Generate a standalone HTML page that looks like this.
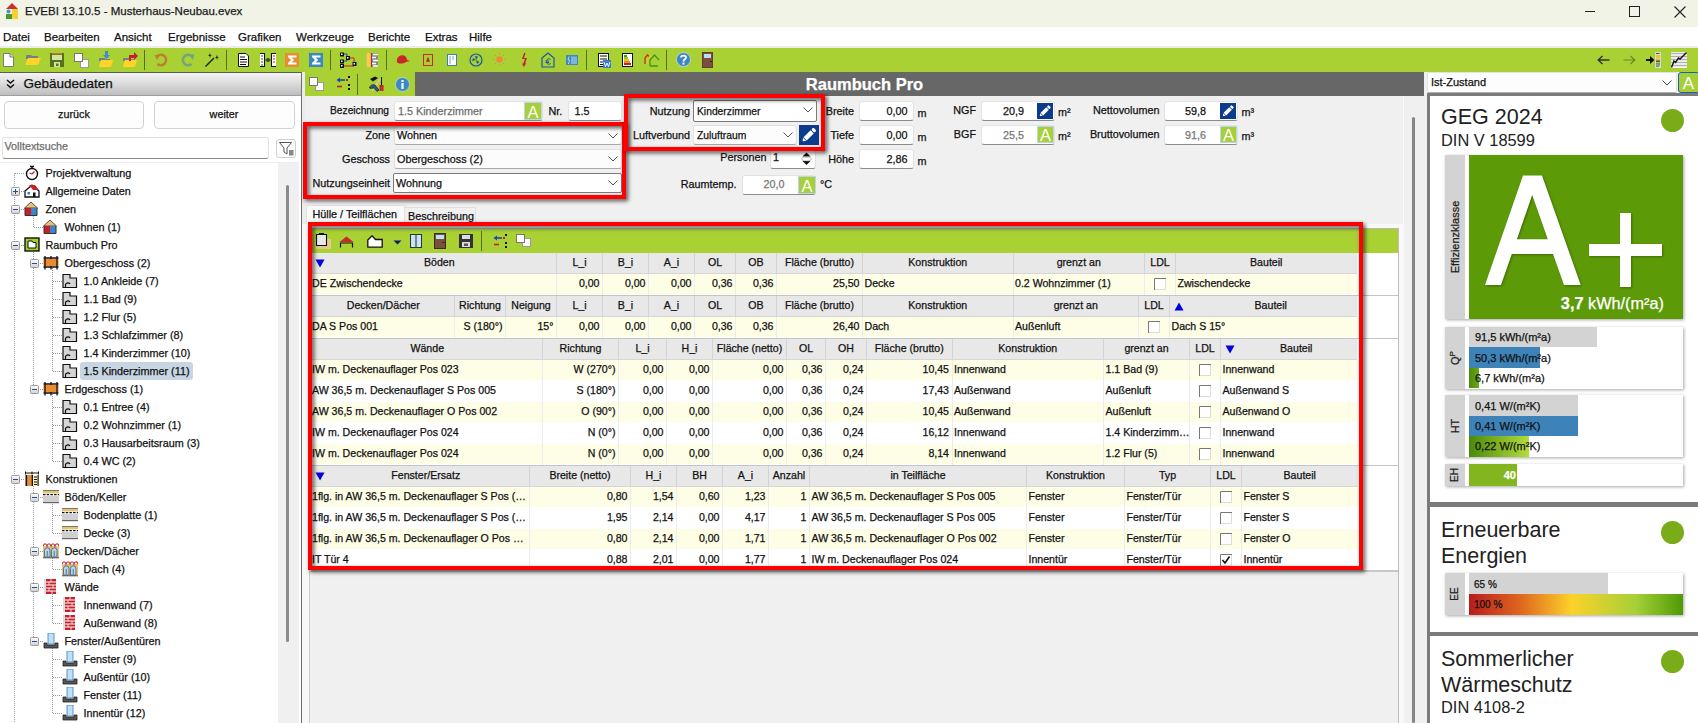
<!DOCTYPE html>
<html><head><meta charset="utf-8"><title>EVEBI</title>
<style>
html,body{margin:0;padding:0;width:1698px;height:723px;overflow:hidden;background:#f0f0f0;font-family:"Liberation Sans", sans-serif;}
body>div,body>svg{position:absolute;box-sizing:border-box;}
.t{position:absolute;white-space:nowrap;line-height:1;-webkit-text-stroke:0.25px currentColor;}
</style></head><body>
<div style="left:0px;top:0px;width:1698px;height:27px;background:#f1f3e7"></div>
<svg style="position:absolute;left:5px;top:3px;" width="14" height="16" viewBox="0 0 14 16"><path d="M7 0 L13 6 L1 6 Z" fill="#c8302a"/><rect x="7" y="6" width="6" height="10" fill="#f5d030"/><rect x="1" y="11" width="6" height="5" fill="#4a9a2a"/><circle cx="3.5" cy="8.5" r="2" fill="#4a90d0"/></svg>
<div class="t" style="left:25px;top:6.42px;font-size:11.5px;color:#1a1a1a;font-weight:normal;">EVEBI 13.10.5 - Musterhaus-Neubau.evex</div>
<svg style="position:absolute;left:1580px;top:0px;" width="118" height="27" viewBox="0 0 118 27"><line x1="5" y1="11.5" x2="15" y2="11.5" stroke="#222" stroke-width="1"/><rect x="49.5" y="6.5" width="10" height="10" fill="none" stroke="#222" stroke-width="1"/><path d="M94.5 6.5 L105.5 17.5 M105.5 6.5 L94.5 17.5" stroke="#222" stroke-width="1.1"/></svg>
<div style="left:0px;top:27px;width:1698px;height:19px;background:#ffffff"></div>
<div style="left:0px;top:46px;width:1698px;height:2px;background:#ececec"></div>
<div class="t" style="left:3px;top:31.73px;font-size:11.5px;color:#111;font-weight:normal;">Datei</div>
<div class="t" style="left:44px;top:31.73px;font-size:11.5px;color:#111;font-weight:normal;">Bearbeiten</div>
<div class="t" style="left:114px;top:31.73px;font-size:11.5px;color:#111;font-weight:normal;">Ansicht</div>
<div class="t" style="left:168px;top:31.73px;font-size:11.5px;color:#111;font-weight:normal;">Ergebnisse</div>
<div class="t" style="left:238px;top:31.73px;font-size:11.5px;color:#111;font-weight:normal;">Grafiken</div>
<div class="t" style="left:296px;top:31.73px;font-size:11.5px;color:#111;font-weight:normal;">Werkzeuge</div>
<div class="t" style="left:368px;top:31.73px;font-size:11.5px;color:#111;font-weight:normal;">Berichte</div>
<div class="t" style="left:425px;top:31.73px;font-size:11.5px;color:#111;font-weight:normal;">Extras</div>
<div class="t" style="left:469px;top:31.73px;font-size:11.5px;color:#111;font-weight:normal;">Hilfe</div>
<div style="left:0px;top:48px;width:1698px;height:24px;background:#a9d134"></div>
<svg style="position:absolute;left:2px;top:52px;" width="13" height="16" viewBox="0 0 13 16"><path d="M1.5 1.5 H8 L11.5 5 V14.5 H1.5 Z" fill="#fff" stroke="#7a7a82" stroke-width="1"/><path d="M8 1.5 V5 H11.5" fill="#e0e0e0" stroke="#7a7a82" stroke-width="1"/></svg>
<svg style="position:absolute;left:25px;top:53px;" width="16" height="13" viewBox="0 0 16 13"><path d="M1 2 H6 L7 3 H13 V6 H1 Z" fill="#7d7d8a"/><path d="M3 5 H16 L13 12 H0 Z" fill="#ffd42a"/></svg>
<svg style="position:absolute;left:50px;top:53px;" width="14" height="14" viewBox="0 0 14 14"><rect x="0" y="0" width="14" height="14" fill="#5b6f1f"/><rect x="2" y="0" width="10" height="1.5" fill="#c8752a"/><rect x="2" y="2" width="10" height="5" fill="#cfe6a0"/><rect x="4" y="9" width="6" height="5" fill="#cfe6a0"/><rect x="6" y="10.5" width="2.5" height="2.5" fill="#5b6f1f"/></svg>
<svg style="position:absolute;left:74px;top:53px;" width="15" height="15" viewBox="0 0 15 15"><rect x="6.5" y="6.5" width="8" height="8" fill="#fff" stroke="#999" stroke-width="1"/><rect x="0.5" y="0.5" width="8" height="8" fill="#fff" stroke="#777" stroke-width="1"/></svg>
<svg style="position:absolute;left:99px;top:51px;" width="15" height="17" viewBox="0 0 15 17"><path d="M0 7 H6 V8 H11 V10 H0 Z" fill="#7d7d8a"/><path d="M2 9 H14 L12 16 H0 Z" fill="#ffd42a"/><path d="M6 0 H9 V4 H11 L7.5 8 L4 4 H6 Z" fill="#3b8fd0"/></svg>
<svg style="position:absolute;left:123px;top:51px;" width="16" height="17" viewBox="0 0 16 17"><path d="M0 7 H6 V8 H11 V10 H0 Z" fill="#7d7d8a"/><path d="M2 9 H14 L12 16 H0 Z" fill="#ffd42a"/><path d="M6 4 H11 V1 L15 5 L11 9 V7 H8 V10 H6 Z" fill="#c8202a"/></svg>
<div style="left:144px;top:50px;width:1px;height:20px;background:#54701a"></div>
<svg style="position:absolute;left:154px;top:53px;" width="15" height="15" viewBox="0 0 15 15"><path d="M3.5 3 A5.2 5.2 0 1 1 3.5 11" fill="none" stroke="#bf7e32" stroke-width="2.6"/><path d="M0.5 2 L6 2 L3 7 Z" fill="#bf7e32"/></svg>
<svg style="position:absolute;left:180px;top:53px;" width="15" height="15" viewBox="0 0 15 15"><path d="M11.5 3 A5.2 5.2 0 1 0 11.5 11" fill="none" stroke="#6fa77a" stroke-width="2.6"/><path d="M14.5 1 L9 2 L13 7 Z" fill="#6fa77a"/></svg>
<svg style="position:absolute;left:205px;top:53px;" width="14" height="14" viewBox="0 0 14 14"><path d="M0.5 13.5 L9 5" stroke="#222" stroke-width="1.4"/><path d="M4 2 L5 0 L5.5 2 L7 2.5 L5.5 3 L5 5 L4.5 3 L3 2.5Z M11 4 L12 2 L12.5 4 L14 4.5 L12.5 5 L12 7 L11.5 5 L10 4.5Z" fill="#222"/></svg>
<div style="left:226px;top:50px;width:1px;height:20px;background:#54701a"></div>
<svg style="position:absolute;left:238px;top:53px;" width="11" height="14" viewBox="0 0 11 14"><path d="M0.5 0.5 H8 L10.5 3 V13.5 H0.5Z" fill="#fff" stroke="#111"/><path d="M2 4 H7 M2 6.5 H9 M2 9 H9 M2 11.5 H8" stroke="#111" stroke-width="1"/></svg>
<svg style="position:absolute;left:259px;top:53px;" width="18" height="14" viewBox="0 0 18 14"><path d="M1 0.5 H5.5 V13.5 H1" fill="#fff" stroke="#111" stroke-width="1.1"/><path d="M17 0.5 H12.5 V13.5 H17" fill="#fff" stroke="#111" stroke-width="1.1"/><path d="M2 3 H4 M2 6 H4 M2 9 H4 M2 12 H4" stroke="#333" stroke-width="0.9"/><path d="M14 3 H16 M14 6 H16 M14 9 H16" stroke="#c8202a" stroke-width="1"/><circle cx="9" cy="7" r="2" fill="#3a4a2a"/><path d="M5.5 7 H12.5" stroke="#444" stroke-width="0.8"/></svg>
<svg style="position:absolute;left:285px;top:53px;" width="14" height="14" viewBox="0 0 14 14"><rect width="14" height="14" fill="#e98c33"/><path d="M3 2.5 H11.5 V4.5 H6.5 L9.2 7 L6.5 9.5 H11.5 V11.5 H3 V10 L6 7 L3 4 Z" fill="#fff"/></svg>
<svg style="position:absolute;left:309px;top:53px;" width="14" height="14" viewBox="0 0 14 14"><rect width="14" height="14" fill="#3b88c3"/><path d="M3 2.5 H11.5 V4.5 H6.5 L9.2 7 L6.5 9.5 H11.5 V11.5 H3 V10 L6 7 L3 4 Z" fill="#fff"/></svg>
<div style="left:330px;top:50px;width:1px;height:20px;background:#54701a"></div>
<svg style="position:absolute;left:339px;top:52px;" width="18" height="17" viewBox="0 0 18 17"><path d="M4 2 H8 V5 M4 9 H8 V7" fill="none" stroke="#1a46b0" stroke-width="1"/><path d="M10 6 H15 V11 M4 14 H15 V13" fill="none" stroke="#c8202a" stroke-width="1"/><rect x="1" y="0.5" width="4" height="4" fill="#111"/><rect x="2" y="1.5" width="1.5" height="1.5" fill="#fff"/><rect x="7" y="4" width="4" height="4" fill="#111"/><rect x="8" y="5" width="1.5" height="1.5" fill="#fff"/><rect x="1" y="7.5" width="4" height="4" fill="#111"/><rect x="2" y="8.5" width="1.5" height="1.5" fill="#fff"/><rect x="1" y="12" width="4" height="4" fill="#111"/><rect x="2" y="13" width="1.5" height="1.5" fill="#fff"/><rect x="13.5" y="10" width="4" height="4" fill="#111"/><rect x="14.5" y="11" width="1.5" height="1.5" fill="#fff"/></svg>
<svg style="position:absolute;left:366px;top:53px;" width="12" height="14" viewBox="0 0 12 14"><rect width="5" height="14" fill="#f5d040"/><path d="M0.5 0 V14 M4.5 0 V14" stroke="#aaa" stroke-width="0.8" stroke-dasharray="1.5 1"/><rect x="5" width="1" height="14" fill="#c8202a"/><rect x="6" width="6" height="14" fill="#8a8a8a"/><path d="M7 1.5 H12 M6 4.5 H10 M7 7.5 H12 M6 10.5 H10 M7 13 H12" stroke="#fff" stroke-width="1.4"/></svg>
<div style="left:386px;top:50px;width:1px;height:20px;background:#54701a"></div>
<svg style="position:absolute;left:396px;top:54px;" width="14" height="11" viewBox="0 0 14 11"><path d="M1 8 C0 2 6 0 9 2 C10 3 11 4 11 6 L14 7 L10 8 C7 10 2 10 1 8Z" fill="#c8282a"/></svg>
<svg style="position:absolute;left:423px;top:54px;" width="10" height="12" viewBox="0 0 10 12"><rect x="0.5" y="0.5" width="9" height="11" fill="none" stroke="#c8282a"/><path d="M5 3 C6 5 7 6 6.5 8 H3.5 C3 6 4 5 5 3Z" fill="#c8282a"/></svg>
<svg style="position:absolute;left:447px;top:54px;" width="10" height="12" viewBox="0 0 10 12"><rect x="0.5" y="0.5" width="9" height="11" fill="#fff" stroke="#3b7fc0"/><path d="M3 2 V10 M6 2 V6" stroke="#6ba0d0" stroke-width="1"/></svg>
<svg style="position:absolute;left:469px;top:53px;" width="14" height="14" viewBox="0 0 14 14"><circle cx="7" cy="7" r="6" fill="none" stroke="#1a5aa0" stroke-width="1.2"/><path d="M7 7 L6 3 L9 3.5Z M7 7 L10.5 9 L8 11Z M7 7 L3 8 L4 5Z" fill="#1a5aa0"/></svg>
<svg style="position:absolute;left:493px;top:53px;" width="13" height="13" viewBox="0 0 13 13"><circle cx="6.5" cy="6.5" r="3.2" fill="#ec8b3a"/><path d="M6.5 0 V1.5 M6.5 11.5 V13 M0 6.5 H1.5 M11.5 6.5 H13 M2 2 L3 3 M10 10 L11 11 M2 11 L3 10 M10 3 L11 2" stroke="#ec8b3a" stroke-width="1"/></svg>
<svg style="position:absolute;left:520px;top:53px;" width="8" height="14" viewBox="0 0 8 14"><path d="M4 0 L2 6 H5 L3 11 L1.5 10 L4 14 L6.5 9.5 L5 10.5 L7 5 H4 L5.5 0Z" fill="#c8202a"/></svg>
<svg style="position:absolute;left:541px;top:52px;" width="14" height="16" viewBox="0 0 14 16"><path d="M1 6 L7 1 L13 6 V15 H1Z" fill="none" stroke="#1a5aa0" stroke-width="1.2"/><path d="M9.5 7.5 C8 6 5.5 7 5.5 9.5 C5.5 12 8 13 9.5 11.5 M4.5 9 H8 M4.5 10.5 H8" fill="none" stroke="#1a5aa0" stroke-width="1"/></svg>
<svg style="position:absolute;left:566px;top:55px;" width="12" height="10" viewBox="0 0 12 10"><rect width="12" height="10" fill="#3b88c3"/><path d="M3 1.5 L2 5 L3.5 5 L2.5 9 M6 1.5 V9 M8 1.5 V9 M10 1.5 V9" stroke="#d8e8f5" stroke-width="0.9"/></svg>
<div style="left:586px;top:50px;width:1px;height:20px;background:#54701a"></div>
<svg style="position:absolute;left:598px;top:53px;" width="13" height="15" viewBox="0 0 13 15"><rect x="0.5" y="0.5" width="10" height="13" fill="#fff" stroke="#111"/><path d="M2 3 H9 M2 6 H9 M2 9 H6 M2 11.5 H6" stroke="#111"/><rect x="5" y="7" width="8" height="8" fill="#3a7cc8"/><path d="M6 9 L7.5 13.5 L9 10 L10.5 13.5 L12 9" fill="none" stroke="#fff" stroke-width="0.9"/></svg>
<svg style="position:absolute;left:622px;top:53px;" width="11" height="14" viewBox="0 0 11 14"><rect x="0.5" y="0.5" width="10" height="13" fill="#fff" stroke="#111"/><rect x="2" y="2" width="3" height="2" fill="#3a9a20"/><rect x="2" y="4" width="4" height="2" fill="#9ac820"/><rect x="2" y="6" width="5" height="2" fill="#f0c020"/><rect x="2" y="8" width="6" height="2" fill="#ec8a30"/><rect x="2" y="10" width="7" height="2" fill="#c8202a"/></svg>
<svg style="position:absolute;left:644px;top:53px;" width="16" height="14" viewBox="0 0 16 14"><path d="M1 11 V5 L3.5 2 L5 3.5" fill="none" stroke="#c8202a" stroke-width="1.2"/><path d="M3.5 12 V6 L6.5 2.5 L8 4" fill="none" stroke="#f0c020" stroke-width="1.2"/><path d="M6 13 V7 L10.5 2 L15 7 M6 13 H14" fill="none" stroke="#3a9a20" stroke-width="1.3"/></svg>
<div style="left:666px;top:50px;width:1px;height:20px;background:#54701a"></div>
<svg style="position:absolute;left:676px;top:52px;" width="15" height="15" viewBox="0 0 15 15"><circle cx="7.5" cy="7.5" r="7" fill="#3b88c3" stroke="#c8dce8" stroke-width="0.8"/><path d="M5 5.5 C5 3 10 3 10 5.5 C10 7.5 7.5 7 7.5 9.5" fill="none" stroke="#fff" stroke-width="1.8"/><rect x="6.5" y="10.5" width="2" height="2" fill="#fff"/></svg>
<svg style="position:absolute;left:702px;top:52px;" width="11" height="16" viewBox="0 0 11 16"><rect x="0" y="0" width="11" height="16" fill="#7b4e3e"/><rect x="0" y="0" width="11" height="16" fill="none" stroke="#4a2e22" stroke-width="1"/><rect x="2" y="2" width="7" height="4" fill="#b8dcf0"/><rect x="8" y="9" width="2" height="1" fill="#222"/></svg>
<svg style="position:absolute;left:1597px;top:55px;" width="13" height="10" viewBox="0 0 13 10"><path d="M12.5 5 H1.5 M5.5 1 L1.2 5 L5.5 9" fill="none" stroke="#333" stroke-width="1.4"/></svg>
<svg style="position:absolute;left:1623px;top:55px;" width="13" height="10" viewBox="0 0 13 10"><path d="M0.5 5 H11.5 M7.5 1 L11.8 5 L7.5 9" fill="none" stroke="#6a8a2a" stroke-width="1.2"/></svg>
<svg style="position:absolute;left:1645px;top:52px;" width="17" height="16" viewBox="0 0 17 16"><path d="M1 8 H6" stroke="#111" stroke-width="2"/><path d="M5 4 L9.5 8 L5 12Z" fill="#111"/><rect x="10" y="0" width="6" height="16" fill="#d8d8d8"/><rect x="11" y="1" width="3.5" height="1" fill="#555"/><rect x="11" y="3" width="4" height="3.5" fill="#f3c523"/><rect x="11" y="7.5" width="4" height="1.5" fill="#6aa84f"/><rect x="11" y="9" width="4" height="1" fill="#c8202a"/><rect x="11" y="10.5" width="4" height="1.5" fill="#6aa84f"/><rect x="11" y="12.5" width="4" height="1" fill="#555"/><rect x="11" y="14" width="3" height="1" fill="#6aa84f"/></svg>
<svg style="position:absolute;left:1671px;top:52px;" width="16" height="16" viewBox="0 0 16 16"><rect width="16" height="16" fill="#fff"/><path d="M0 1.5 H16 M0 4.5 H16 M0 7.5 H16 M0 10.5 H16 M0 13.5 H16" stroke="#b0b0b0" stroke-width="1.6"/><path d="M0.5 15.5 L3 9 L4.5 10.5 L7.5 6 L9 7 L15.5 0.5" fill="none" stroke="#111" stroke-width="1.4"/></svg>
<div style="left:0px;top:72px;width:301px;height:651px;background:#ffffff"></div>
<div style="left:0px;top:72px;width:301px;height:1px;background:#5a5a5a"></div>
<div style="left:0px;top:73px;width:301px;height:22px;background:linear-gradient(#f4f4f4,#e2e2e2 35%,#bebebe)"></div>
<div style="left:0px;top:95px;width:301px;height:1px;background:#9e9e9e"></div>
<div style="left:301px;top:72px;width:1px;height:651px;background:#6e6e6e"></div>
<div style="left:302px;top:72px;width:3px;height:651px;background:#ececec"></div>
<svg style="position:absolute;left:6px;top:79px;" width="9" height="10" viewBox="0 0 9 10"><path d="M1 1 L4.5 4 L8 1 M1 5.5 L4.5 8.5 L8 5.5" fill="none" stroke="#111" stroke-width="1.5"/></svg>
<div class="t" style="left:23.5px;top:77.33px;font-size:13.5px;color:#111;font-weight:normal;">Gebäudedaten</div>
<div style="left:4px;top:101px;width:140px;height:28px;background:#fdfdfd;border:1px solid #d3d3d3;border-radius:4px"></div>
<div style="left:154px;top:101px;width:141px;height:28px;background:#fdfdfd;border:1px solid #d3d3d3;border-radius:4px"></div>
<div class="t" style="left:-226px;width:600px;text-align:center;top:109.42px;font-size:10.8px;color:#111;font-weight:normal;">zurück</div>
<div class="t" style="left:-76px;width:600px;text-align:center;top:109.42px;font-size:10.8px;color:#111;font-weight:normal;">weiter</div>
<div style="left:2px;top:137px;width:267px;height:22px;background:#fff;border:1px solid #e3e3e3;border-bottom:1px solid #8a8a8a;border-radius:3px"></div>
<div class="t" style="left:4.5px;top:141.22px;font-size:10.8px;color:#6d6d6d;font-weight:normal;">Volltextsuche</div>
<div style="left:276px;top:139px;width:20px;height:19px;background:#fdfdfd;border:1px solid #d0d0d0;border-radius:3px"></div>
<svg style="position:absolute;left:279px;top:142px;" width="15" height="14" viewBox="0 0 15 14"><path d="M0.5 0.5 H12.5 L8 6 V12 L5 10 V6 Z" fill="#fff" stroke="#555" stroke-width="1"/><rect x="10" y="8" width="4.5" height="5.5" fill="#888"/></svg>
<div style="left:0px;top:162px;width:299px;height:1px;background:#ececec"></div>
<div style="left:278px;top:163px;width:21px;height:560px;background:#f0f0f0"></div>
<div style="left:286px;top:185px;width:3px;height:457px;background:#8a8a8a;border-radius:1.5px"></div>
<div style="left:14px;top:173px;width:1px;height:550px;background-image:linear-gradient(#9a9a9a 50%,transparent 50%);background-size:1px 2px"></div>
<div style="left:33px;top:214px;width:1px;height:13px;background-image:linear-gradient(#9a9a9a 50%,transparent 50%);background-size:1px 2px"></div>
<div style="left:33px;top:250px;width:1px;height:139px;background-image:linear-gradient(#9a9a9a 50%,transparent 50%);background-size:1px 2px"></div>
<div style="left:52px;top:268px;width:1px;height:103px;background-image:linear-gradient(#9a9a9a 50%,transparent 50%);background-size:1px 2px"></div>
<div style="left:52px;top:394px;width:1px;height:67px;background-image:linear-gradient(#9a9a9a 50%,transparent 50%);background-size:1px 2px"></div>
<div style="left:33px;top:484px;width:1px;height:157px;background-image:linear-gradient(#9a9a9a 50%,transparent 50%);background-size:1px 2px"></div>
<div style="left:52px;top:502px;width:1px;height:31px;background-image:linear-gradient(#9a9a9a 50%,transparent 50%);background-size:1px 2px"></div>
<div style="left:52px;top:556px;width:1px;height:13px;background-image:linear-gradient(#9a9a9a 50%,transparent 50%);background-size:1px 2px"></div>
<div style="left:52px;top:592px;width:1px;height:31px;background-image:linear-gradient(#9a9a9a 50%,transparent 50%);background-size:1px 2px"></div>
<div style="left:52px;top:646px;width:1px;height:67px;background-image:linear-gradient(#9a9a9a 50%,transparent 50%);background-size:1px 2px"></div>
<div style="left:80px;top:362px;width:113px;height:18px;background:#c8d6e4;border-radius:3px"></div>
<div style="left:15px;top:173px;width:9px;height:1px;background-image:linear-gradient(90deg,#9a9a9a 50%,transparent 50%);background-size:2px 1px"></div>
<svg style="position:absolute;left:24px;top:165px;" width="16" height="16" viewBox="0 0 16 16"><circle cx="8" cy="9" r="5.5" fill="#fff" stroke="#111" stroke-width="1.4"/><path d="M6 1.5 H10 M8 1.5 V3.5" stroke="#111" stroke-width="1.4"/><path d="M8 9 L10.5 6.5 M8 9 L5.5 8" stroke="#c8202a" stroke-width="1.2"/></svg>
<div class="t" style="left:45.5px;top:167.82px;font-size:10.8px;color:#111;font-weight:normal;">Projektverwaltung</div>
<div style="left:15px;top:191px;width:9px;height:1px;background-image:linear-gradient(90deg,#9a9a9a 50%,transparent 50%);background-size:2px 1px"></div>
<svg style="position:absolute;left:11.0px;top:186.5px;" width="9" height="9" viewBox="0 0 9 9"><defs><linearGradient id="eg" x1="0" y1="0" x2="0" y2="1"><stop offset="0" stop-color="#fff"/><stop offset="1" stop-color="#d0d0d0"/></linearGradient></defs><rect x="0.5" y="0.5" width="8" height="8" rx="1" fill="url(#eg)" stroke="#9a9a9a"/><path d="M2 4.5 H7" stroke="#2a4a9a" stroke-width="1"/><path d="M4.5 2 V7" stroke="#2a4a9a" stroke-width="1"/></svg>
<svg style="position:absolute;left:24px;top:183px;" width="16" height="16" viewBox="0 0 16 16"><path d="M1 8 L8 2 L15 8 V14 H1 Z" fill="#fff" stroke="#111" stroke-width="1.3"/><path d="M5 2 H11 L15 7 H9 Z" fill="#c8202a"/><rect x="3.5" y="9" width="2.5" height="2.5" fill="#3a7fc1"/><rect x="9" y="9.5" width="2.5" height="4.5" fill="#111"/></svg>
<div class="t" style="left:45.5px;top:185.82px;font-size:10.8px;color:#111;font-weight:normal;">Allgemeine Daten</div>
<div style="left:15px;top:209px;width:9px;height:1px;background-image:linear-gradient(90deg,#9a9a9a 50%,transparent 50%);background-size:2px 1px"></div>
<svg style="position:absolute;left:11.0px;top:204.5px;" width="9" height="9" viewBox="0 0 9 9"><defs><linearGradient id="eg" x1="0" y1="0" x2="0" y2="1"><stop offset="0" stop-color="#fff"/><stop offset="1" stop-color="#d0d0d0"/></linearGradient></defs><rect x="0.5" y="0.5" width="8" height="8" rx="1" fill="url(#eg)" stroke="#9a9a9a"/><path d="M2 4.5 H7" stroke="#2a4a9a" stroke-width="1"/></svg>
<svg style="position:absolute;left:24px;top:201px;" width="16" height="16" viewBox="0 0 16 16"><path d="M7 1 L13.5 7 H0.5 Z" fill="#e7c07a" stroke="#333" stroke-width="0.8"/><rect x="1" y="7" width="6" height="7" fill="#c8202a"/><rect x="7" y="7" width="6" height="7" fill="#3a86c8"/><path d="M1 7 V14.5 H13 V7" fill="none" stroke="#333" stroke-width="1"/></svg>
<div class="t" style="left:45.5px;top:203.82px;font-size:10.8px;color:#111;font-weight:normal;">Zonen</div>
<div style="left:34px;top:227px;width:9px;height:1px;background-image:linear-gradient(90deg,#9a9a9a 50%,transparent 50%);background-size:2px 1px"></div>
<svg style="position:absolute;left:43px;top:219px;" width="16" height="16" viewBox="0 0 16 16"><path d="M7 1 L13.5 7 H0.5 Z" fill="#e7c07a" stroke="#333" stroke-width="0.8"/><rect x="1" y="7" width="6" height="7" fill="#c8202a"/><rect x="7" y="7" width="6" height="7" fill="#3a86c8"/><path d="M1 7 V14.5 H13 V7" fill="none" stroke="#333" stroke-width="1"/></svg>
<div class="t" style="left:64.5px;top:221.82px;font-size:10.8px;color:#111;font-weight:normal;">Wohnen (1)</div>
<div style="left:15px;top:245px;width:9px;height:1px;background-image:linear-gradient(90deg,#9a9a9a 50%,transparent 50%);background-size:2px 1px"></div>
<svg style="position:absolute;left:11.0px;top:240.5px;" width="9" height="9" viewBox="0 0 9 9"><defs><linearGradient id="eg" x1="0" y1="0" x2="0" y2="1"><stop offset="0" stop-color="#fff"/><stop offset="1" stop-color="#d0d0d0"/></linearGradient></defs><rect x="0.5" y="0.5" width="8" height="8" rx="1" fill="url(#eg)" stroke="#9a9a9a"/><path d="M2 4.5 H7" stroke="#2a4a9a" stroke-width="1"/></svg>
<svg style="position:absolute;left:24px;top:237px;" width="16" height="16" viewBox="0 0 16 16"><rect x="1" y="1" width="14" height="13" fill="#9fcf2a" stroke="#111" stroke-width="1.4"/><path d="M4 4 H8 L9 5.5 H12 V11 H4 Z" fill="#fff" stroke="#111" stroke-width="1"/></svg>
<div class="t" style="left:45.5px;top:239.82px;font-size:10.8px;color:#111;font-weight:normal;">Raumbuch Pro</div>
<div style="left:34px;top:263px;width:9px;height:1px;background-image:linear-gradient(90deg,#9a9a9a 50%,transparent 50%);background-size:2px 1px"></div>
<svg style="position:absolute;left:30.0px;top:258.5px;" width="9" height="9" viewBox="0 0 9 9"><defs><linearGradient id="eg" x1="0" y1="0" x2="0" y2="1"><stop offset="0" stop-color="#fff"/><stop offset="1" stop-color="#d0d0d0"/></linearGradient></defs><rect x="0.5" y="0.5" width="8" height="8" rx="1" fill="url(#eg)" stroke="#9a9a9a"/><path d="M2 4.5 H7" stroke="#2a4a9a" stroke-width="1"/></svg>
<svg style="position:absolute;left:43px;top:255px;" width="16" height="16" viewBox="0 0 16 16"><rect x="0.5" y="4" width="15" height="7" fill="#ec8b2e"/><path d="M0.5 3 H15.5 M0.5 12 H15.5 M2 1 V14.5 M14 1 V14.5 M8 1 V4 M8 11 V14.5" stroke="#111" stroke-width="1.3"/></svg>
<div class="t" style="left:64.5px;top:257.82px;font-size:10.8px;color:#111;font-weight:normal;">Obergeschoss (2)</div>
<div style="left:53px;top:281px;width:9px;height:1px;background-image:linear-gradient(90deg,#9a9a9a 50%,transparent 50%);background-size:2px 1px"></div>
<svg style="position:absolute;left:62px;top:273px;" width="16" height="16" viewBox="0 0 16 16"><path d="M1 1.5 H8 V5 H14.5 V14.5 H1 Z" fill="#d5d5d5" stroke="#111" stroke-width="1.2"/><path d="M3.5 14.5 V11.5 A2.5 2.5 0 0 1 8 11" fill="none" stroke="#111" stroke-width="1.2"/></svg>
<div class="t" style="left:83.5px;top:275.82px;font-size:10.8px;color:#111;font-weight:normal;">1.0 Ankleide (7)</div>
<div style="left:53px;top:299px;width:9px;height:1px;background-image:linear-gradient(90deg,#9a9a9a 50%,transparent 50%);background-size:2px 1px"></div>
<svg style="position:absolute;left:62px;top:291px;" width="16" height="16" viewBox="0 0 16 16"><path d="M1 1.5 H8 V5 H14.5 V14.5 H1 Z" fill="#d5d5d5" stroke="#111" stroke-width="1.2"/><path d="M3.5 14.5 V11.5 A2.5 2.5 0 0 1 8 11" fill="none" stroke="#111" stroke-width="1.2"/></svg>
<div class="t" style="left:83.5px;top:293.82px;font-size:10.8px;color:#111;font-weight:normal;">1.1 Bad (9)</div>
<div style="left:53px;top:317px;width:9px;height:1px;background-image:linear-gradient(90deg,#9a9a9a 50%,transparent 50%);background-size:2px 1px"></div>
<svg style="position:absolute;left:62px;top:309px;" width="16" height="16" viewBox="0 0 16 16"><path d="M1 1.5 H8 V5 H14.5 V14.5 H1 Z" fill="#d5d5d5" stroke="#111" stroke-width="1.2"/><path d="M3.5 14.5 V11.5 A2.5 2.5 0 0 1 8 11" fill="none" stroke="#111" stroke-width="1.2"/></svg>
<div class="t" style="left:83.5px;top:311.82px;font-size:10.8px;color:#111;font-weight:normal;">1.2 Flur (5)</div>
<div style="left:53px;top:335px;width:9px;height:1px;background-image:linear-gradient(90deg,#9a9a9a 50%,transparent 50%);background-size:2px 1px"></div>
<svg style="position:absolute;left:62px;top:327px;" width="16" height="16" viewBox="0 0 16 16"><path d="M1 1.5 H8 V5 H14.5 V14.5 H1 Z" fill="#d5d5d5" stroke="#111" stroke-width="1.2"/><path d="M3.5 14.5 V11.5 A2.5 2.5 0 0 1 8 11" fill="none" stroke="#111" stroke-width="1.2"/></svg>
<div class="t" style="left:83.5px;top:329.82px;font-size:10.8px;color:#111;font-weight:normal;">1.3 Schlafzimmer (8)</div>
<div style="left:53px;top:353px;width:9px;height:1px;background-image:linear-gradient(90deg,#9a9a9a 50%,transparent 50%);background-size:2px 1px"></div>
<svg style="position:absolute;left:62px;top:345px;" width="16" height="16" viewBox="0 0 16 16"><path d="M1 1.5 H8 V5 H14.5 V14.5 H1 Z" fill="#d5d5d5" stroke="#111" stroke-width="1.2"/><path d="M3.5 14.5 V11.5 A2.5 2.5 0 0 1 8 11" fill="none" stroke="#111" stroke-width="1.2"/></svg>
<div class="t" style="left:83.5px;top:347.82px;font-size:10.8px;color:#111;font-weight:normal;">1.4 Kinderzimmer (10)</div>
<div style="left:53px;top:371px;width:9px;height:1px;background-image:linear-gradient(90deg,#9a9a9a 50%,transparent 50%);background-size:2px 1px"></div>
<svg style="position:absolute;left:62px;top:363px;" width="16" height="16" viewBox="0 0 16 16"><path d="M1 1.5 H8 V5 H14.5 V14.5 H1 Z" fill="#d5d5d5" stroke="#111" stroke-width="1.2"/><path d="M3.5 14.5 V11.5 A2.5 2.5 0 0 1 8 11" fill="none" stroke="#111" stroke-width="1.2"/></svg>
<div class="t" style="left:83.5px;top:365.82px;font-size:10.8px;color:#111;font-weight:normal;">1.5 Kinderzimmer (11)</div>
<div style="left:34px;top:389px;width:9px;height:1px;background-image:linear-gradient(90deg,#9a9a9a 50%,transparent 50%);background-size:2px 1px"></div>
<svg style="position:absolute;left:30.0px;top:384.5px;" width="9" height="9" viewBox="0 0 9 9"><defs><linearGradient id="eg" x1="0" y1="0" x2="0" y2="1"><stop offset="0" stop-color="#fff"/><stop offset="1" stop-color="#d0d0d0"/></linearGradient></defs><rect x="0.5" y="0.5" width="8" height="8" rx="1" fill="url(#eg)" stroke="#9a9a9a"/><path d="M2 4.5 H7" stroke="#2a4a9a" stroke-width="1"/></svg>
<svg style="position:absolute;left:43px;top:381px;" width="16" height="16" viewBox="0 0 16 16"><rect x="0.5" y="4" width="15" height="7" fill="#ec8b2e"/><path d="M0.5 3 H15.5 M0.5 12 H15.5 M2 1 V14.5 M14 1 V14.5 M8 1 V4 M8 11 V14.5" stroke="#111" stroke-width="1.3"/></svg>
<div class="t" style="left:64.5px;top:383.82px;font-size:10.8px;color:#111;font-weight:normal;">Erdgeschoss (1)</div>
<div style="left:53px;top:407px;width:9px;height:1px;background-image:linear-gradient(90deg,#9a9a9a 50%,transparent 50%);background-size:2px 1px"></div>
<svg style="position:absolute;left:62px;top:399px;" width="16" height="16" viewBox="0 0 16 16"><path d="M1 1.5 H8 V5 H14.5 V14.5 H1 Z" fill="#d5d5d5" stroke="#111" stroke-width="1.2"/><path d="M3.5 14.5 V11.5 A2.5 2.5 0 0 1 8 11" fill="none" stroke="#111" stroke-width="1.2"/></svg>
<div class="t" style="left:83.5px;top:401.82px;font-size:10.8px;color:#111;font-weight:normal;">0.1 Entree (4)</div>
<div style="left:53px;top:425px;width:9px;height:1px;background-image:linear-gradient(90deg,#9a9a9a 50%,transparent 50%);background-size:2px 1px"></div>
<svg style="position:absolute;left:62px;top:417px;" width="16" height="16" viewBox="0 0 16 16"><path d="M1 1.5 H8 V5 H14.5 V14.5 H1 Z" fill="#d5d5d5" stroke="#111" stroke-width="1.2"/><path d="M3.5 14.5 V11.5 A2.5 2.5 0 0 1 8 11" fill="none" stroke="#111" stroke-width="1.2"/></svg>
<div class="t" style="left:83.5px;top:419.82px;font-size:10.8px;color:#111;font-weight:normal;">0.2 Wohnzimmer (1)</div>
<div style="left:53px;top:443px;width:9px;height:1px;background-image:linear-gradient(90deg,#9a9a9a 50%,transparent 50%);background-size:2px 1px"></div>
<svg style="position:absolute;left:62px;top:435px;" width="16" height="16" viewBox="0 0 16 16"><path d="M1 1.5 H8 V5 H14.5 V14.5 H1 Z" fill="#d5d5d5" stroke="#111" stroke-width="1.2"/><path d="M3.5 14.5 V11.5 A2.5 2.5 0 0 1 8 11" fill="none" stroke="#111" stroke-width="1.2"/></svg>
<div class="t" style="left:83.5px;top:437.82px;font-size:10.8px;color:#111;font-weight:normal;">0.3 Hausarbeitsraum (3)</div>
<div style="left:53px;top:461px;width:9px;height:1px;background-image:linear-gradient(90deg,#9a9a9a 50%,transparent 50%);background-size:2px 1px"></div>
<svg style="position:absolute;left:62px;top:453px;" width="16" height="16" viewBox="0 0 16 16"><path d="M1 1.5 H8 V5 H14.5 V14.5 H1 Z" fill="#d5d5d5" stroke="#111" stroke-width="1.2"/><path d="M3.5 14.5 V11.5 A2.5 2.5 0 0 1 8 11" fill="none" stroke="#111" stroke-width="1.2"/></svg>
<div class="t" style="left:83.5px;top:455.82px;font-size:10.8px;color:#111;font-weight:normal;">0.4 WC (2)</div>
<div style="left:15px;top:479px;width:9px;height:1px;background-image:linear-gradient(90deg,#9a9a9a 50%,transparent 50%);background-size:2px 1px"></div>
<svg style="position:absolute;left:11.0px;top:474.5px;" width="9" height="9" viewBox="0 0 9 9"><defs><linearGradient id="eg" x1="0" y1="0" x2="0" y2="1"><stop offset="0" stop-color="#fff"/><stop offset="1" stop-color="#d0d0d0"/></linearGradient></defs><rect x="0.5" y="0.5" width="8" height="8" rx="1" fill="url(#eg)" stroke="#9a9a9a"/><path d="M2 4.5 H7" stroke="#2a4a9a" stroke-width="1"/></svg>
<svg style="position:absolute;left:24px;top:471px;" width="16" height="16" viewBox="0 0 16 16"><path d="M1 2 H15 M1.5 0.5 V3.5 M8 0.5 V3.5 M14.5 0.5 V3.5" stroke="#111" stroke-width="1"/><rect x="1.5" y="4" width="2" height="11" fill="#111"/><rect x="3.5" y="4" width="4" height="11" fill="#ec8b2e"/><rect x="7.5" y="4" width="1.5" height="11" fill="#111"/><rect x="9" y="4" width="4.5" height="11" fill="#fff7b0"/><path d="M10 6 H13 M10 8.5 H13 M10 11 H13 M10 13.5 H13" stroke="#111" stroke-width="1"/><rect x="13.5" y="4" width="1.2" height="11" fill="#111"/></svg>
<div class="t" style="left:45.5px;top:473.82px;font-size:10.8px;color:#111;font-weight:normal;">Konstruktionen</div>
<div style="left:34px;top:497px;width:9px;height:1px;background-image:linear-gradient(90deg,#9a9a9a 50%,transparent 50%);background-size:2px 1px"></div>
<svg style="position:absolute;left:30.0px;top:492.5px;" width="9" height="9" viewBox="0 0 9 9"><defs><linearGradient id="eg" x1="0" y1="0" x2="0" y2="1"><stop offset="0" stop-color="#fff"/><stop offset="1" stop-color="#d0d0d0"/></linearGradient></defs><rect x="0.5" y="0.5" width="8" height="8" rx="1" fill="url(#eg)" stroke="#9a9a9a"/><path d="M2 4.5 H7" stroke="#2a4a9a" stroke-width="1"/></svg>
<svg style="position:absolute;left:43px;top:489px;" width="16" height="16" viewBox="0 0 16 16"><rect x="0" y="1" width="16" height="13" fill="#d0d0d0"/><rect x="0" y="1" width="16" height="1" fill="#777"/><rect x="0" y="2" width="16" height="2.5" fill="#e7c36a"/><rect x="0" y="4.5" width="16" height="2.5" fill="#fff"/><path d="M0 5.7 H16" stroke="#111" stroke-width="1.3" stroke-dasharray="2.5 1.2"/><rect x="0" y="13" width="16" height="1.2" fill="#666"/></svg>
<div class="t" style="left:64.5px;top:491.82px;font-size:10.8px;color:#111;font-weight:normal;">Böden/Keller</div>
<div style="left:53px;top:515px;width:9px;height:1px;background-image:linear-gradient(90deg,#9a9a9a 50%,transparent 50%);background-size:2px 1px"></div>
<svg style="position:absolute;left:62px;top:507px;" width="16" height="16" viewBox="0 0 16 16"><rect x="0" y="1" width="16" height="13" fill="#d0d0d0"/><rect x="0" y="1" width="16" height="1" fill="#777"/><rect x="0" y="2" width="16" height="2.5" fill="#e7c36a"/><rect x="0" y="4.5" width="16" height="2.5" fill="#fff"/><path d="M0 5.7 H16" stroke="#111" stroke-width="1.3" stroke-dasharray="2.5 1.2"/><rect x="0" y="13" width="16" height="1.2" fill="#666"/></svg>
<div class="t" style="left:83.5px;top:509.82px;font-size:10.8px;color:#111;font-weight:normal;">Bodenplatte (1)</div>
<div style="left:53px;top:533px;width:9px;height:1px;background-image:linear-gradient(90deg,#9a9a9a 50%,transparent 50%);background-size:2px 1px"></div>
<svg style="position:absolute;left:62px;top:525px;" width="16" height="16" viewBox="0 0 16 16"><rect x="0" y="1" width="16" height="13" fill="#d0d0d0"/><rect x="0" y="1" width="16" height="1" fill="#777"/><rect x="0" y="2" width="16" height="2.5" fill="#e7c36a"/><rect x="0" y="4.5" width="16" height="2.5" fill="#fff"/><path d="M0 5.7 H16" stroke="#111" stroke-width="1.3" stroke-dasharray="2.5 1.2"/><rect x="0" y="13" width="16" height="1.2" fill="#666"/></svg>
<div class="t" style="left:83.5px;top:527.82px;font-size:10.8px;color:#111;font-weight:normal;">Decke (3)</div>
<div style="left:34px;top:551px;width:9px;height:1px;background-image:linear-gradient(90deg,#9a9a9a 50%,transparent 50%);background-size:2px 1px"></div>
<svg style="position:absolute;left:30.0px;top:546.5px;" width="9" height="9" viewBox="0 0 9 9"><defs><linearGradient id="eg" x1="0" y1="0" x2="0" y2="1"><stop offset="0" stop-color="#fff"/><stop offset="1" stop-color="#d0d0d0"/></linearGradient></defs><rect x="0.5" y="0.5" width="8" height="8" rx="1" fill="url(#eg)" stroke="#9a9a9a"/><path d="M2 4.5 H7" stroke="#2a4a9a" stroke-width="1"/></svg>
<svg style="position:absolute;left:43px;top:543px;" width="16" height="16" viewBox="0 0 16 16"><rect x="0" y="3" width="16" height="12" fill="#e2c47a"/><path d="M0 3 C1.5 0 3 0 4 3 C5 0 7 0 8 3 C9 0 11 0 12 3 C13 0 15 0 16 3" fill="none" stroke="#c8202a" stroke-width="1.1"/><path d="M1.5 14 V7.5 A2.75 2.75 0 0 1 7 7.5 V14 Z M8.5 14 V7.5 A2.75 2.75 0 0 1 14 7.5 V14 Z" fill="#b8d4ea" stroke="#4a6a88" stroke-width="0.9"/><path d="M4.25 13.5 V8 M11.25 13.5 V8" stroke="#4a6a88" stroke-width="0.9"/><rect x="0" y="14.3" width="16" height="1" fill="#555"/></svg>
<div class="t" style="left:64.5px;top:545.82px;font-size:10.8px;color:#111;font-weight:normal;">Decken/Dächer</div>
<div style="left:53px;top:569px;width:9px;height:1px;background-image:linear-gradient(90deg,#9a9a9a 50%,transparent 50%);background-size:2px 1px"></div>
<svg style="position:absolute;left:62px;top:561px;" width="16" height="16" viewBox="0 0 16 16"><rect x="0" y="3" width="16" height="12" fill="#e2c47a"/><path d="M0 3 C1.5 0 3 0 4 3 C5 0 7 0 8 3 C9 0 11 0 12 3 C13 0 15 0 16 3" fill="none" stroke="#c8202a" stroke-width="1.1"/><path d="M1.5 14 V7.5 A2.75 2.75 0 0 1 7 7.5 V14 Z M8.5 14 V7.5 A2.75 2.75 0 0 1 14 7.5 V14 Z" fill="#b8d4ea" stroke="#4a6a88" stroke-width="0.9"/><path d="M4.25 13.5 V8 M11.25 13.5 V8" stroke="#4a6a88" stroke-width="0.9"/><rect x="0" y="14.3" width="16" height="1" fill="#555"/></svg>
<div class="t" style="left:83.5px;top:563.82px;font-size:10.8px;color:#111;font-weight:normal;">Dach (4)</div>
<div style="left:34px;top:587px;width:9px;height:1px;background-image:linear-gradient(90deg,#9a9a9a 50%,transparent 50%);background-size:2px 1px"></div>
<svg style="position:absolute;left:30.0px;top:582.5px;" width="9" height="9" viewBox="0 0 9 9"><defs><linearGradient id="eg" x1="0" y1="0" x2="0" y2="1"><stop offset="0" stop-color="#fff"/><stop offset="1" stop-color="#d0d0d0"/></linearGradient></defs><rect x="0.5" y="0.5" width="8" height="8" rx="1" fill="url(#eg)" stroke="#9a9a9a"/><path d="M2 4.5 H7" stroke="#2a4a9a" stroke-width="1"/></svg>
<svg style="position:absolute;left:43px;top:579px;" width="16" height="16" viewBox="0 0 16 16"><rect x="1" y="0" width="12" height="15" fill="#ddd"/><rect x="3" y="0" width="10" height="15" fill="#c8202a"/><path d="M3 3 H13 M3 6 H13 M3 9 H13 M3 12 H13" stroke="#fff" stroke-width="1"/><path d="M8 0 V3 M6 3 V6 M10 6 V9 M6 9 V12 M9 12 V15" stroke="#fff" stroke-width="0.8"/></svg>
<div class="t" style="left:64.5px;top:581.82px;font-size:10.8px;color:#111;font-weight:normal;">Wände</div>
<div style="left:53px;top:605px;width:9px;height:1px;background-image:linear-gradient(90deg,#9a9a9a 50%,transparent 50%);background-size:2px 1px"></div>
<svg style="position:absolute;left:62px;top:597px;" width="16" height="16" viewBox="0 0 16 16"><rect x="1" y="0" width="12" height="15" fill="#ddd"/><rect x="3" y="0" width="10" height="15" fill="#c8202a"/><path d="M3 3 H13 M3 6 H13 M3 9 H13 M3 12 H13" stroke="#fff" stroke-width="1"/><path d="M8 0 V3 M6 3 V6 M10 6 V9 M6 9 V12 M9 12 V15" stroke="#fff" stroke-width="0.8"/></svg>
<div class="t" style="left:83.5px;top:599.82px;font-size:10.8px;color:#111;font-weight:normal;">Innenwand (7)</div>
<div style="left:53px;top:623px;width:9px;height:1px;background-image:linear-gradient(90deg,#9a9a9a 50%,transparent 50%);background-size:2px 1px"></div>
<svg style="position:absolute;left:62px;top:615px;" width="16" height="16" viewBox="0 0 16 16"><rect x="1" y="0" width="12" height="15" fill="#ddd"/><rect x="3" y="0" width="10" height="15" fill="#c8202a"/><path d="M3 3 H13 M3 6 H13 M3 9 H13 M3 12 H13" stroke="#fff" stroke-width="1"/><path d="M8 0 V3 M6 3 V6 M10 6 V9 M6 9 V12 M9 12 V15" stroke="#fff" stroke-width="0.8"/></svg>
<div class="t" style="left:83.5px;top:617.82px;font-size:10.8px;color:#111;font-weight:normal;">Außenwand (8)</div>
<div style="left:34px;top:641px;width:9px;height:1px;background-image:linear-gradient(90deg,#9a9a9a 50%,transparent 50%);background-size:2px 1px"></div>
<svg style="position:absolute;left:30.0px;top:636.5px;" width="9" height="9" viewBox="0 0 9 9"><defs><linearGradient id="eg" x1="0" y1="0" x2="0" y2="1"><stop offset="0" stop-color="#fff"/><stop offset="1" stop-color="#d0d0d0"/></linearGradient></defs><rect x="0.5" y="0.5" width="8" height="8" rx="1" fill="url(#eg)" stroke="#9a9a9a"/><path d="M2 4.5 H7" stroke="#2a4a9a" stroke-width="1"/></svg>
<svg style="position:absolute;left:43px;top:633px;" width="16" height="16" viewBox="0 0 16 16"><rect x="5" y="0" width="6" height="11" fill="#bfe0f5" stroke="#3a80c0" stroke-width="0.8"/><path d="M1 15 V10 H4 V12 H12 V10 H15 V15 Z" fill="#555" stroke="#222" stroke-width="0.8"/></svg>
<div class="t" style="left:64.5px;top:635.82px;font-size:10.8px;color:#111;font-weight:normal;">Fenster/Außentüren</div>
<div style="left:53px;top:659px;width:9px;height:1px;background-image:linear-gradient(90deg,#9a9a9a 50%,transparent 50%);background-size:2px 1px"></div>
<svg style="position:absolute;left:62px;top:651px;" width="16" height="16" viewBox="0 0 16 16"><rect x="5" y="0" width="6" height="11" fill="#bfe0f5" stroke="#3a80c0" stroke-width="0.8"/><path d="M1 15 V10 H4 V12 H12 V10 H15 V15 Z" fill="#555" stroke="#222" stroke-width="0.8"/></svg>
<div class="t" style="left:83.5px;top:653.82px;font-size:10.8px;color:#111;font-weight:normal;">Fenster (9)</div>
<div style="left:53px;top:677px;width:9px;height:1px;background-image:linear-gradient(90deg,#9a9a9a 50%,transparent 50%);background-size:2px 1px"></div>
<svg style="position:absolute;left:62px;top:669px;" width="16" height="16" viewBox="0 0 16 16"><rect x="5" y="0" width="6" height="11" fill="#bfe0f5" stroke="#3a80c0" stroke-width="0.8"/><path d="M1 15 V10 H4 V12 H12 V10 H15 V15 Z" fill="#555" stroke="#222" stroke-width="0.8"/></svg>
<div class="t" style="left:83.5px;top:671.82px;font-size:10.8px;color:#111;font-weight:normal;">Außentür (10)</div>
<div style="left:53px;top:695px;width:9px;height:1px;background-image:linear-gradient(90deg,#9a9a9a 50%,transparent 50%);background-size:2px 1px"></div>
<svg style="position:absolute;left:62px;top:687px;" width="16" height="16" viewBox="0 0 16 16"><rect x="5" y="0" width="6" height="11" fill="#bfe0f5" stroke="#3a80c0" stroke-width="0.8"/><path d="M1 15 V10 H4 V12 H12 V10 H15 V15 Z" fill="#555" stroke="#222" stroke-width="0.8"/></svg>
<div class="t" style="left:83.5px;top:689.82px;font-size:10.8px;color:#111;font-weight:normal;">Fenster (11)</div>
<div style="left:53px;top:713px;width:9px;height:1px;background-image:linear-gradient(90deg,#9a9a9a 50%,transparent 50%);background-size:2px 1px"></div>
<svg style="position:absolute;left:62px;top:705px;" width="16" height="16" viewBox="0 0 16 16"><rect x="5" y="0" width="6" height="11" fill="#bfe0f5" stroke="#3a80c0" stroke-width="0.8"/><path d="M1 15 V10 H4 V12 H12 V10 H15 V15 Z" fill="#555" stroke="#222" stroke-width="0.8"/></svg>
<div class="t" style="left:83.5px;top:707.82px;font-size:10.8px;color:#111;font-weight:normal;">Innentür (12)</div>
<div style="left:305px;top:72px;width:110px;height:24px;background:#a9d134"></div>
<div style="left:415px;top:72px;width:1009px;height:24px;background:#676767"></div>
<div class="t" style="left:564.5px;width:600px;text-align:center;top:75.77px;font-size:16.5px;color:#ffffff;font-weight:bold;">Raumbuch Pro</div>
<svg style="position:absolute;left:309px;top:77px;" width="15" height="14" viewBox="0 0 15 14"><rect x="6.5" y="5.5" width="8" height="8" fill="#fff" stroke="#9a9a9a"/><rect x="0.5" y="0.5" width="8" height="8" fill="#fff" stroke="#777"/></svg>
<svg style="position:absolute;left:336px;top:76px;" width="15" height="15" viewBox="0 0 15 15"><path d="M3 4 H9" stroke="#1a46a8" stroke-width="1.6"/><path d="M0.5 4 L4 1.5 V6.5Z" fill="#1a46a8"/><rect x="10" y="3" width="2" height="2" fill="#c8202a"/><path d="M1 10.5 H6" stroke="#c8202a" stroke-width="1.6"/><rect x="12" y="0" width="2" height="2" fill="#111"/><rect x="12" y="8" width="2" height="2" fill="#111"/><rect x="12" y="12" width="2" height="2" fill="#111"/></svg>
<div style="left:357px;top:74px;width:1px;height:21px;background:#54701a"></div>
<svg style="position:absolute;left:369px;top:76px;" width="16" height="16" viewBox="0 0 16 16"><path d="M3 15 L11 3" stroke="#e8c890" stroke-width="1.5"/><path d="M1 3 L6 0.5 L9 2 L4 5.5Z" fill="#111"/><path d="M0.5 12 C1 9 4 8 6 9 L10 14 L8 15.5 L5 12 C3 12 2 13 0.5 12Z" fill="#2a5a8a" stroke="#111" stroke-width="0.6"/><path d="M12.5 1 V9" stroke="#111" stroke-width="1"/><rect x="10.5" y="9" width="4" height="6" fill="#c8202a"/><rect x="12" y="11" width="1" height="4" fill="#8a5a5a"/></svg>
<svg style="position:absolute;left:395px;top:77px;" width="15" height="15" viewBox="0 0 15 15"><circle cx="7.5" cy="7.5" r="7" fill="#3b88c3" stroke="#cfe0ea" stroke-width="0.7"/><rect x="6.4" y="3" width="2.2" height="2" fill="#fff"/><rect x="6.4" y="6" width="2.2" height="6" fill="#fff"/></svg>
<div class="t" style="right:1309px;top:106.13px;font-size:10.2px;color:#111;font-weight:normal;">Bezeichnung</div>
<div style="left:394px;top:101px;width:149px;height:20px;background:#fff;border:1px solid #e2e2e2;border-bottom:1px solid #8c8c8c;border-radius:3px"></div>
<div class="t" style="left:398px;top:106.12px;font-size:10.8px;color:#6d6d6d;font-weight:normal;">1.5 Kinderzimmer</div>
<div style="left:524px;top:102px;width:18px;height:18px;background:#a6cf38;border:1px solid #bcd6ee"></div>
<div class="t" style="left:233.0px;width:600px;text-align:center;top:104.27px;font-size:16.5px;color:#fff;font-weight:normal;-webkit-text-stroke:0">A</div>
<div class="t" style="left:548.5px;top:105.62px;font-size:10.8px;color:#111;font-weight:normal;">Nr.</div>
<div style="left:568px;top:101px;width:54px;height:20px;background:#fff;border:1px solid #e2e2e2;border-bottom:1px solid #8c8c8c;border-radius:3px"></div>
<div class="t" style="left:574.5px;top:106.12px;font-size:10.8px;color:#111;font-weight:normal;">1.5</div>
<div class="t" style="right:1308px;top:130.22px;font-size:10.8px;color:#111;font-weight:normal;">Zone</div>
<div style="left:394px;top:126px;width:228px;height:19px;background:#fcfcfc;border:1px solid #e0e0e0;border-bottom:1px solid #a8a8a8;border-radius:3px"></div>
<svg style="position:absolute;left:608px;top:133px;" width="10" height="6" viewBox="0 0 10 6"><path d="M0.5 0.5 L5 5 L9.5 0.5" fill="none" stroke="#555" stroke-width="1"/></svg>
<div class="t" style="left:397px;top:130.22px;font-size:10.8px;color:#111;font-weight:normal;">Wohnen</div>
<div class="t" style="right:1308px;top:154.12px;font-size:10.8px;color:#111;font-weight:normal;">Geschoss</div>
<div style="left:394px;top:149px;width:228px;height:20px;background:#fcfcfc;border:1px solid #e0e0e0;border-bottom:1px solid #a8a8a8;border-radius:3px"></div>
<svg style="position:absolute;left:608px;top:156px;" width="10" height="6" viewBox="0 0 10 6"><path d="M0.5 0.5 L5 5 L9.5 0.5" fill="none" stroke="#555" stroke-width="1"/></svg>
<div class="t" style="left:397px;top:154.12px;font-size:10.8px;color:#111;font-weight:normal;">Obergeschoss (2)</div>
<div class="t" style="right:1308px;top:178.12px;font-size:10.8px;color:#111;font-weight:normal;">Nutzungseinheit</div>
<div style="left:393px;top:173px;width:229px;height:20px;background:#fff;border:1px solid #7a7a7a;border-radius:2px"></div>
<svg style="position:absolute;left:608px;top:180px;" width="10" height="6" viewBox="0 0 10 6"><path d="M0.5 0.5 L5 5 L9.5 0.5" fill="none" stroke="#555" stroke-width="1"/></svg>
<div class="t" style="left:396px;top:177.92px;font-size:10.8px;color:#111;font-weight:normal;">Wohnung</div>
<div class="t" style="right:1008px;top:106.22px;font-size:10.8px;color:#111;font-weight:normal;">Nutzung</div>
<div style="left:693px;top:100px;width:124px;height:22px;background:#fff;border:1px solid #7a7a7a;border-radius:2px"></div>
<svg style="position:absolute;left:803px;top:107px;" width="10" height="6" viewBox="0 0 10 6"><path d="M0.5 0.5 L5 5 L9.5 0.5" fill="none" stroke="#555" stroke-width="1"/></svg>
<div class="t" style="left:697px;top:106.64px;font-size:10.3px;color:#111;font-weight:normal;">Kinderzimmer</div>
<div class="t" style="right:1008px;top:130.42px;font-size:10.8px;color:#111;font-weight:normal;">Luftverbund</div>
<div style="left:693px;top:125px;width:104px;height:20px;background:#fcfcfc;border:1px solid #e0e0e0;border-bottom:1px solid #a8a8a8;border-radius:3px"></div>
<svg style="position:absolute;left:783px;top:132px;" width="10" height="6" viewBox="0 0 10 6"><path d="M0.5 0.5 L5 5 L9.5 0.5" fill="none" stroke="#555" stroke-width="1"/></svg>
<div class="t" style="left:697px;top:130.85px;font-size:10.3px;color:#111;font-weight:normal;">Zuluftraum</div>
<svg style="position:absolute;left:799px;top:125px;" width="20" height="20" viewBox="0 0 20 20"><rect width="20" height="20" fill="#0c3a8c"/><g transform="translate(10.0,10.0) scale(1.25) translate(-8,-8) rotate(-45 8 8)" fill="#fff"><rect x="3.6" y="6.2" width="8" height="3.6"/><rect x="12.3" y="6.2" width="2.4" height="3.6" rx="1"/><path d="M0.8 8 L3 6.2 V9.8Z"/></g></svg>
<div class="t" style="right:931.5px;top:152.42px;font-size:10.8px;color:#111;font-weight:normal;">Personen</div>
<div style="left:770px;top:149px;width:46px;height:20px;background:#fff;border:1px solid #e2e2e2;border-bottom:1px solid #8c8c8c;border-radius:3px"></div>
<div class="t" style="left:773px;top:152.42px;font-size:10.8px;color:#111;font-weight:normal;">1</div>
<svg style="position:absolute;left:800px;top:151px;" width="13" height="16" viewBox="0 0 13 16"><path d="M6.5 1.5 L10.5 5.5 H2.5Z" fill="#111"/><path d="M2.5 10 H10.5 L6.5 14Z" fill="#111"/><path d="M1.5 8 C1.5 5.5 11.5 5.5 11.5 8 M1.5 8 C1.5 10.5 11.5 10.5 11.5 8" fill="none" stroke="#999" stroke-width="0.6"/></svg>
<div class="t" style="right:961.5px;top:178.62px;font-size:10.8px;color:#111;font-weight:normal;">Raumtemp.</div>
<div style="left:742px;top:175px;width:74px;height:20px;background:#fff;border:1px solid #e2e2e2;border-bottom:1px solid #8c8c8c;border-radius:3px"></div>
<div class="t" style="right:913.5px;top:178.92px;font-size:10.8px;color:#777;font-weight:normal;">20,0</div>
<div style="left:798px;top:176px;width:18px;height:18px;background:#a6cf38;border:1px solid #bcd6ee"></div>
<div class="t" style="left:507.0px;width:600px;text-align:center;top:178.28px;font-size:16.5px;color:#fff;font-weight:normal;-webkit-text-stroke:0">A</div>
<div class="t" style="left:820px;top:178.92px;font-size:10.8px;color:#111;font-weight:normal;">°C</div>
<div class="t" style="right:844px;top:105.92px;font-size:10.8px;color:#111;font-weight:normal;">Breite</div>
<div style="left:859px;top:101px;width:55px;height:20px;background:#fff;border:1px solid #e2e2e2;border-bottom:1px solid #8c8c8c;border-radius:3px"></div>
<div class="t" style="right:790.5px;top:106.12px;font-size:10.8px;color:#111;font-weight:normal;">0,00</div>
<div class="t" style="left:917.5px;top:107.62px;font-size:10.8px;color:#111;font-weight:normal;">m</div>
<div class="t" style="right:844px;top:129.92px;font-size:10.8px;color:#111;font-weight:normal;">Tiefe</div>
<div style="left:859px;top:125px;width:55px;height:20px;background:#fff;border:1px solid #e2e2e2;border-bottom:1px solid #8c8c8c;border-radius:3px"></div>
<div class="t" style="right:790.5px;top:130.12px;font-size:10.8px;color:#111;font-weight:normal;">0,00</div>
<div class="t" style="left:917.5px;top:131.62px;font-size:10.8px;color:#111;font-weight:normal;">m</div>
<div class="t" style="right:844px;top:153.92px;font-size:10.8px;color:#111;font-weight:normal;">Höhe</div>
<div style="left:859px;top:149px;width:55px;height:20px;background:#fff;border:1px solid #e2e2e2;border-bottom:1px solid #8c8c8c;border-radius:3px"></div>
<div class="t" style="right:790.5px;top:154.12px;font-size:10.8px;color:#111;font-weight:normal;">2,86</div>
<div class="t" style="left:917.5px;top:155.62px;font-size:10.8px;color:#111;font-weight:normal;">m</div>
<div class="t" style="right:722px;top:105.42px;font-size:10.8px;color:#111;font-weight:normal;">NGF</div>
<div style="left:981px;top:101px;width:74px;height:20px;background:#fff;border:1px solid #e2e2e2;border-bottom:1px solid #8c8c8c;border-radius:3px"></div>
<div class="t" style="right:674px;top:105.62px;font-size:10.8px;color:#111;font-weight:normal;">20,9</div>
<svg style="position:absolute;left:1037px;top:103px;" width="16" height="16" viewBox="0 0 16 16"><rect width="16" height="16" fill="#0c3a8c"/><g transform="translate(8.0,8.0) scale(1.0) translate(-8,-8) rotate(-45 8 8)" fill="#fff"><rect x="3.6" y="6.2" width="8" height="3.6"/><rect x="12.3" y="6.2" width="2.4" height="3.6" rx="1"/><path d="M0.8 8 L3 6.2 V9.8Z"/></g></svg>
<div class="t" style="left:1058px;top:106.62px;font-size:10.8px;color:#111;font-weight:normal;">m²</div>
<div class="t" style="right:722px;top:129.22px;font-size:10.8px;color:#111;font-weight:normal;">BGF</div>
<div style="left:981px;top:125px;width:74px;height:20px;background:#fff;border:1px solid #e2e2e2;border-bottom:1px solid #8c8c8c;border-radius:3px"></div>
<div class="t" style="right:674px;top:129.62px;font-size:10.8px;color:#777;font-weight:normal;">25,5</div>
<div style="left:1037px;top:126px;width:17px;height:17px;background:#a6cf38;border:1px solid #bcd6ee"></div>
<div class="t" style="left:745.5px;width:600px;text-align:center;top:127.27px;font-size:16.5px;color:#fff;font-weight:normal;-webkit-text-stroke:0">A</div>
<div class="t" style="left:1058px;top:130.62px;font-size:10.8px;color:#111;font-weight:normal;">m²</div>
<div class="t" style="right:538.5px;top:105.42px;font-size:10.8px;color:#111;font-weight:normal;">Nettovolumen</div>
<div style="left:1164px;top:101px;width:74px;height:20px;background:#fff;border:1px solid #e2e2e2;border-bottom:1px solid #8c8c8c;border-radius:3px"></div>
<div class="t" style="right:492px;top:105.62px;font-size:10.8px;color:#111;font-weight:normal;">59,8</div>
<svg style="position:absolute;left:1220px;top:103px;" width="16" height="16" viewBox="0 0 16 16"><rect width="16" height="16" fill="#0c3a8c"/><g transform="translate(8.0,8.0) scale(1.0) translate(-8,-8) rotate(-45 8 8)" fill="#fff"><rect x="3.6" y="6.2" width="8" height="3.6"/><rect x="12.3" y="6.2" width="2.4" height="3.6" rx="1"/><path d="M0.8 8 L3 6.2 V9.8Z"/></g></svg>
<div class="t" style="left:1241.5px;top:106.62px;font-size:10.8px;color:#111;font-weight:normal;">m³</div>
<div class="t" style="right:538.5px;top:129.22px;font-size:10.8px;color:#111;font-weight:normal;">Bruttovolumen</div>
<div style="left:1164px;top:125px;width:74px;height:20px;background:#fff;border:1px solid #e2e2e2;border-bottom:1px solid #8c8c8c;border-radius:3px"></div>
<div class="t" style="right:492px;top:129.62px;font-size:10.8px;color:#777;font-weight:normal;">91,6</div>
<div style="left:1220px;top:126px;width:17px;height:17px;background:#a6cf38;border:1px solid #bcd6ee"></div>
<div class="t" style="left:928.5px;width:600px;text-align:center;top:127.27px;font-size:16.5px;color:#fff;font-weight:normal;-webkit-text-stroke:0">A</div>
<div class="t" style="left:1241.5px;top:130.62px;font-size:10.8px;color:#111;font-weight:normal;">m³</div>
<div style="left:1403px;top:96px;width:1px;height:627px;background:#fafafa"></div>
<div style="left:1412px;top:117px;width:3px;height:606px;background:#858585;border-radius:1.5px"></div>
<div style="left:306px;top:205px;width:99px;height:18px;background:#f9f9f9;border:1px solid #e0e0e0;border-bottom:none"></div>
<div class="t" style="left:312.5px;top:208.82px;font-size:10.8px;color:#111;font-weight:normal;">Hülle / Teilflächen</div>
<div style="left:405px;top:207px;width:71px;height:16px;background:#f0f0f0;border:1px solid #e0e0e0;border-bottom:none;border-left:none"></div>
<div class="t" style="left:408px;top:210.82px;font-size:10.8px;color:#111;font-weight:normal;">Beschreibung</div>
<div style="left:302px;top:224px;width:1102px;height:499px;background:#f8f8f8"></div>
<div style="left:309px;top:228px;width:1090px;height:495px;background:#f0f0f0;border-left:1px solid #cdcdcd;border-right:1px solid #bdbdbd"></div>
<div style="left:310px;top:228px;width:1088px;height:344px;background:#ffffff;border-top:1px solid #b8b8b8;border-bottom:1px solid #c8c8c8"></div>
<div style="left:311px;top:229px;width:1087px;height:24px;background:#a9d134"></div>
<svg style="position:absolute;left:315px;top:233px;" width="16" height="16" viewBox="0 0 16 16"><rect x="0" y="6" width="16" height="10" fill="#e3c888"/><path d="M1.5 1.5 H11.5 V12.5 H1.5Z" fill="#e8e8e8" stroke="#111" stroke-width="1.1"/><rect x="4" y="0" width="5" height="2" fill="#111"/></svg>
<svg style="position:absolute;left:339px;top:236px;" width="15" height="12" viewBox="0 0 15 12"><path d="M0.5 6 L7.5 0.5 L14.5 6Z" fill="#c8282a"/><path d="M1.5 11.5 V7 H13.5 V11.5" fill="none" stroke="#111" stroke-width="1.2"/></svg>
<svg style="position:absolute;left:367px;top:235px;" width="16" height="13" viewBox="0 0 16 13"><path d="M0.8 12.2 V5 L5 0.8 L8.5 4.5 H15.2 V12.2Z" fill="#fff" stroke="#111" stroke-width="1.3"/></svg>
<svg style="position:absolute;left:393px;top:240px;" width="9" height="5" viewBox="0 0 9 5"><path d="M0.5 0.5 H8.5 L4.5 4.5Z" fill="#0a1e6a"/></svg>
<svg style="position:absolute;left:410px;top:234px;" width="12" height="14" viewBox="0 0 12 14"><rect x="0.5" y="0.5" width="11" height="13" fill="#bde0f5" stroke="#333"/><path d="M6 1 V13" stroke="#333" stroke-width="1"/><path d="M3 1 V13 M9 1 V13" stroke="#d8eef8" stroke-width="1"/></svg>
<svg style="position:absolute;left:434px;top:233px;" width="12" height="16" viewBox="0 0 12 16"><rect x="0.5" y="0.5" width="11" height="15" fill="#7b4e3e" stroke="#3a2a20"/><rect x="2" y="2" width="8" height="4" fill="#bde0f5"/><rect x="8.5" y="9" width="2" height="1" fill="#222"/></svg>
<svg style="position:absolute;left:459px;top:234px;" width="14" height="14" viewBox="0 0 14 14"><rect width="14" height="14" fill="#333"/><rect x="3" y="1" width="8" height="4" fill="#dcdcdc"/><rect x="3" y="8" width="8" height="5" fill="#dcdcdc"/><rect x="5" y="9.5" width="4" height="2.5" fill="#555"/></svg>
<div style="left:481px;top:231px;width:1px;height:20px;background:#54701a"></div>
<svg style="position:absolute;left:493px;top:234px;" width="15" height="15" viewBox="0 0 15 15"><path d="M3 4 H9" stroke="#1a46a8" stroke-width="1.6"/><path d="M0.5 4 L4 1.5 V6.5Z" fill="#1a46a8"/><rect x="10" y="3" width="2" height="2" fill="#c8202a"/><path d="M1 10.5 H6" stroke="#c8202a" stroke-width="1.6"/><rect x="12" y="0" width="2" height="2" fill="#111"/><rect x="12" y="8" width="2" height="2" fill="#111"/><rect x="12" y="12" width="2" height="2" fill="#111"/></svg>
<svg style="position:absolute;left:516px;top:234px;" width="15" height="13" viewBox="0 0 15 13"><rect x="6.5" y="4.5" width="8" height="8" fill="#fff" stroke="#9a9a9a"/><rect x="0.5" y="0.5" width="8" height="8" fill="#fff" stroke="#777"/></svg>
<div style="left:312px;top:253px;width:1045px;height:20px;background:#e8e8e8"></div>
<div style="left:312px;top:273px;width:1045px;height:1px;background:#d6d6d6"></div>
<div class="t" style="left:139.25px;width:600px;text-align:center;top:257.29px;font-size:10.6px;color:#111;font-weight:normal;">Böden</div>
<div style="left:556px;top:253px;width:1px;height:20px;background:#d4d4d4"></div>
<div class="t" style="left:279.5px;width:600px;text-align:center;top:257.29px;font-size:10.6px;color:#111;font-weight:normal;">L_i</div>
<div style="left:602px;top:253px;width:1px;height:20px;background:#d4d4d4"></div>
<div class="t" style="left:325.5px;width:600px;text-align:center;top:257.29px;font-size:10.6px;color:#111;font-weight:normal;">B_i</div>
<div style="left:648px;top:253px;width:1px;height:20px;background:#d4d4d4"></div>
<div class="t" style="left:371.5px;width:600px;text-align:center;top:257.29px;font-size:10.6px;color:#111;font-weight:normal;">A_i</div>
<div style="left:694px;top:253px;width:1px;height:20px;background:#d4d4d4"></div>
<div class="t" style="left:415.0px;width:600px;text-align:center;top:257.29px;font-size:10.6px;color:#111;font-weight:normal;">OL</div>
<div style="left:735px;top:253px;width:1px;height:20px;background:#d4d4d4"></div>
<div class="t" style="left:456.0px;width:600px;text-align:center;top:257.29px;font-size:10.6px;color:#111;font-weight:normal;">OB</div>
<div style="left:776px;top:253px;width:1px;height:20px;background:#d4d4d4"></div>
<div class="t" style="left:519.5px;width:600px;text-align:center;top:257.29px;font-size:10.6px;color:#111;font-weight:normal;">Fläche (brutto)</div>
<div style="left:862px;top:253px;width:1px;height:20px;background:#d4d4d4"></div>
<div class="t" style="left:637.75px;width:600px;text-align:center;top:257.29px;font-size:10.6px;color:#111;font-weight:normal;">Konstruktion</div>
<div style="left:1013px;top:253px;width:1px;height:20px;background:#d4d4d4"></div>
<div class="t" style="left:778.75px;width:600px;text-align:center;top:257.29px;font-size:10.6px;color:#111;font-weight:normal;">grenzt an</div>
<div style="left:1144px;top:253px;width:1px;height:20px;background:#d4d4d4"></div>
<div class="t" style="left:860.0px;width:600px;text-align:center;top:257.29px;font-size:10.6px;color:#111;font-weight:normal;">LDL</div>
<div style="left:1175px;top:253px;width:1px;height:20px;background:#d4d4d4"></div>
<div class="t" style="left:966.25px;width:600px;text-align:center;top:257.29px;font-size:10.6px;color:#111;font-weight:normal;">Bauteil</div>
<svg style="position:absolute;left:315px;top:259px;" width="10" height="9" viewBox="0 0 10 9"><path d="M0.5 0.5 H9.5 L5 8.5Z" fill="#0000e0"/></svg>
<div style="left:312px;top:274px;width:1045px;height:20px;background:#fefee6"></div>
<div class="t" style="left:312px;top:278.29px;font-size:10.6px;color:#111;font-weight:normal;">DE Zwischendecke</div>
<div style="left:556px;top:274px;width:1px;height:21px;background:#ececec"></div>
<div class="t" style="right:1098.5px;top:278.29px;font-size:10.6px;color:#111;font-weight:normal;">0,00</div>
<div style="left:602px;top:274px;width:1px;height:21px;background:#ececec"></div>
<div class="t" style="right:1052.5px;top:278.29px;font-size:10.6px;color:#111;font-weight:normal;">0,00</div>
<div style="left:648px;top:274px;width:1px;height:21px;background:#ececec"></div>
<div class="t" style="right:1006.5px;top:278.29px;font-size:10.6px;color:#111;font-weight:normal;">0,00</div>
<div style="left:694px;top:274px;width:1px;height:21px;background:#ececec"></div>
<div class="t" style="right:965.5px;top:278.29px;font-size:10.6px;color:#111;font-weight:normal;">0,36</div>
<div style="left:735px;top:274px;width:1px;height:21px;background:#ececec"></div>
<div class="t" style="right:924.5px;top:278.29px;font-size:10.6px;color:#111;font-weight:normal;">0,36</div>
<div style="left:776px;top:274px;width:1px;height:21px;background:#ececec"></div>
<div class="t" style="right:838.5px;top:278.29px;font-size:10.6px;color:#111;font-weight:normal;">25,50</div>
<div style="left:862px;top:274px;width:1px;height:21px;background:#ececec"></div>
<div class="t" style="left:864.5px;top:278.29px;font-size:10.6px;color:#111;font-weight:normal;">Decke</div>
<div style="left:1013px;top:274px;width:1px;height:21px;background:#ececec"></div>
<div class="t" style="left:1015px;top:278.29px;font-size:10.6px;color:#111;font-weight:normal;">0.2 Wohnzimmer (1)</div>
<div style="left:1144px;top:274px;width:1px;height:21px;background:#ececec"></div>
<svg style="position:absolute;left:1154.0px;top:278px;" width="12" height="12" viewBox="0 0 12 12"><rect x="0" y="0" width="12" height="12" fill="#fff"/><path d="M0.5 12 V0.5 H12" stroke="#777" fill="none"/><path d="M1 11.5 H11.5 V1" stroke="#dcdcdc" fill="none"/></svg>
<div style="left:1175px;top:274px;width:1px;height:21px;background:#ececec"></div>
<div class="t" style="left:1177.5px;top:278.29px;font-size:10.6px;color:#111;font-weight:normal;">Zwischendecke</div>
<div style="left:311px;top:295px;width:1087px;height:1px;background:#c4c4c4"></div>
<div style="left:312px;top:296px;width:1045px;height:20px;background:#e8e8e8"></div>
<div style="left:312px;top:316px;width:1045px;height:1px;background:#d6d6d6"></div>
<div class="t" style="left:83.25px;width:600px;text-align:center;top:300.29px;font-size:10.6px;color:#111;font-weight:normal;">Decken/Dächer</div>
<div style="left:454px;top:296px;width:1px;height:20px;background:#d4d4d4"></div>
<div class="t" style="left:180.0px;width:600px;text-align:center;top:300.29px;font-size:10.6px;color:#111;font-weight:normal;">Richtung</div>
<div style="left:505px;top:296px;width:1px;height:20px;background:#d4d4d4"></div>
<div class="t" style="left:231.0px;width:600px;text-align:center;top:300.29px;font-size:10.6px;color:#111;font-weight:normal;">Neigung</div>
<div style="left:556px;top:296px;width:1px;height:20px;background:#d4d4d4"></div>
<div class="t" style="left:279.5px;width:600px;text-align:center;top:300.29px;font-size:10.6px;color:#111;font-weight:normal;">L_i</div>
<div style="left:602px;top:296px;width:1px;height:20px;background:#d4d4d4"></div>
<div class="t" style="left:325.5px;width:600px;text-align:center;top:300.29px;font-size:10.6px;color:#111;font-weight:normal;">B_i</div>
<div style="left:648px;top:296px;width:1px;height:20px;background:#d4d4d4"></div>
<div class="t" style="left:371.5px;width:600px;text-align:center;top:300.29px;font-size:10.6px;color:#111;font-weight:normal;">A_i</div>
<div style="left:694px;top:296px;width:1px;height:20px;background:#d4d4d4"></div>
<div class="t" style="left:415.0px;width:600px;text-align:center;top:300.29px;font-size:10.6px;color:#111;font-weight:normal;">OL</div>
<div style="left:735px;top:296px;width:1px;height:20px;background:#d4d4d4"></div>
<div class="t" style="left:456.0px;width:600px;text-align:center;top:300.29px;font-size:10.6px;color:#111;font-weight:normal;">OB</div>
<div style="left:776px;top:296px;width:1px;height:20px;background:#d4d4d4"></div>
<div class="t" style="left:519.5px;width:600px;text-align:center;top:300.29px;font-size:10.6px;color:#111;font-weight:normal;">Fläche (brutto)</div>
<div style="left:862px;top:296px;width:1px;height:20px;background:#d4d4d4"></div>
<div class="t" style="left:637.75px;width:600px;text-align:center;top:300.29px;font-size:10.6px;color:#111;font-weight:normal;">Konstruktion</div>
<div style="left:1013px;top:296px;width:1px;height:20px;background:#d4d4d4"></div>
<div class="t" style="left:775.75px;width:600px;text-align:center;top:300.29px;font-size:10.6px;color:#111;font-weight:normal;">grenzt an</div>
<div style="left:1138px;top:296px;width:1px;height:20px;background:#d4d4d4"></div>
<div class="t" style="left:854.0px;width:600px;text-align:center;top:300.29px;font-size:10.6px;color:#111;font-weight:normal;">LDL</div>
<div style="left:1169px;top:296px;width:1px;height:20px;background:#d4d4d4"></div>
<div class="t" style="left:970.75px;width:600px;text-align:center;top:300.29px;font-size:10.6px;color:#111;font-weight:normal;">Bauteil</div>
<svg style="position:absolute;left:1173.5px;top:302px;" width="10" height="9" viewBox="0 0 10 9"><path d="M0.5 8.5 H9.5 L5 0.5Z" fill="#0000e0"/></svg>
<div style="left:312px;top:317px;width:1045px;height:20px;background:#fefee6"></div>
<div class="t" style="left:312px;top:321.29px;font-size:10.6px;color:#111;font-weight:normal;">DA S Pos 001</div>
<div style="left:454px;top:317px;width:1px;height:21px;background:#ececec"></div>
<div class="t" style="right:1195.5px;top:321.29px;font-size:10.6px;color:#111;font-weight:normal;">S (180°)</div>
<div style="left:505px;top:317px;width:1px;height:21px;background:#ececec"></div>
<div class="t" style="right:1144.5px;top:321.29px;font-size:10.6px;color:#111;font-weight:normal;">15°</div>
<div style="left:556px;top:317px;width:1px;height:21px;background:#ececec"></div>
<div class="t" style="right:1098.5px;top:321.29px;font-size:10.6px;color:#111;font-weight:normal;">0,00</div>
<div style="left:602px;top:317px;width:1px;height:21px;background:#ececec"></div>
<div class="t" style="right:1052.5px;top:321.29px;font-size:10.6px;color:#111;font-weight:normal;">0,00</div>
<div style="left:648px;top:317px;width:1px;height:21px;background:#ececec"></div>
<div class="t" style="right:1006.5px;top:321.29px;font-size:10.6px;color:#111;font-weight:normal;">0,00</div>
<div style="left:694px;top:317px;width:1px;height:21px;background:#ececec"></div>
<div class="t" style="right:965.5px;top:321.29px;font-size:10.6px;color:#111;font-weight:normal;">0,36</div>
<div style="left:735px;top:317px;width:1px;height:21px;background:#ececec"></div>
<div class="t" style="right:924.5px;top:321.29px;font-size:10.6px;color:#111;font-weight:normal;">0,36</div>
<div style="left:776px;top:317px;width:1px;height:21px;background:#ececec"></div>
<div class="t" style="right:838.5px;top:321.29px;font-size:10.6px;color:#111;font-weight:normal;">26,40</div>
<div style="left:862px;top:317px;width:1px;height:21px;background:#ececec"></div>
<div class="t" style="left:864.5px;top:321.29px;font-size:10.6px;color:#111;font-weight:normal;">Dach</div>
<div style="left:1013px;top:317px;width:1px;height:21px;background:#ececec"></div>
<div class="t" style="left:1015px;top:321.29px;font-size:10.6px;color:#111;font-weight:normal;">Außenluft</div>
<div style="left:1138px;top:317px;width:1px;height:21px;background:#ececec"></div>
<svg style="position:absolute;left:1148.0px;top:321px;" width="12" height="12" viewBox="0 0 12 12"><rect x="0" y="0" width="12" height="12" fill="#fff"/><path d="M0.5 12 V0.5 H12" stroke="#777" fill="none"/><path d="M1 11.5 H11.5 V1" stroke="#dcdcdc" fill="none"/></svg>
<div style="left:1169px;top:317px;width:1px;height:21px;background:#ececec"></div>
<div class="t" style="left:1171.5px;top:321.29px;font-size:10.6px;color:#111;font-weight:normal;">Dach S 15°</div>
<div style="left:311px;top:338px;width:1087px;height:1px;background:#c4c4c4"></div>
<div style="left:312px;top:339px;width:1045px;height:20px;background:#e8e8e8"></div>
<div style="left:312px;top:359px;width:1045px;height:1px;background:#d6d6d6"></div>
<div class="t" style="left:127.25px;width:600px;text-align:center;top:343.29px;font-size:10.6px;color:#111;font-weight:normal;">Wände</div>
<div style="left:542px;top:339px;width:1px;height:20px;background:#d4d4d4"></div>
<div class="t" style="left:280.5px;width:600px;text-align:center;top:343.29px;font-size:10.6px;color:#111;font-weight:normal;">Richtung</div>
<div style="left:618px;top:339px;width:1px;height:20px;background:#d4d4d4"></div>
<div class="t" style="left:342.5px;width:600px;text-align:center;top:343.29px;font-size:10.6px;color:#111;font-weight:normal;">L_i</div>
<div style="left:666px;top:339px;width:1px;height:20px;background:#d4d4d4"></div>
<div class="t" style="left:389.5px;width:600px;text-align:center;top:343.29px;font-size:10.6px;color:#111;font-weight:normal;">H_i</div>
<div style="left:712px;top:339px;width:1px;height:20px;background:#d4d4d4"></div>
<div class="t" style="left:449.5px;width:600px;text-align:center;top:343.29px;font-size:10.6px;color:#111;font-weight:normal;">Fläche (netto)</div>
<div style="left:786px;top:339px;width:1px;height:20px;background:#d4d4d4"></div>
<div class="t" style="left:506.0px;width:600px;text-align:center;top:343.29px;font-size:10.6px;color:#111;font-weight:normal;">OL</div>
<div style="left:825px;top:339px;width:1px;height:20px;background:#d4d4d4"></div>
<div class="t" style="left:546.0px;width:600px;text-align:center;top:343.29px;font-size:10.6px;color:#111;font-weight:normal;">OH</div>
<div style="left:866px;top:339px;width:1px;height:20px;background:#d4d4d4"></div>
<div class="t" style="left:609.25px;width:600px;text-align:center;top:343.29px;font-size:10.6px;color:#111;font-weight:normal;">Fläche (brutto)</div>
<div style="left:952px;top:339px;width:1px;height:20px;background:#d4d4d4"></div>
<div class="t" style="left:727.75px;width:600px;text-align:center;top:343.29px;font-size:10.6px;color:#111;font-weight:normal;">Konstruktion</div>
<div style="left:1103px;top:339px;width:1px;height:20px;background:#d4d4d4"></div>
<div class="t" style="left:846.5px;width:600px;text-align:center;top:343.29px;font-size:10.6px;color:#111;font-weight:normal;">grenzt an</div>
<div style="left:1189px;top:339px;width:1px;height:20px;background:#d4d4d4"></div>
<div class="t" style="left:905.0px;width:600px;text-align:center;top:343.29px;font-size:10.6px;color:#111;font-weight:normal;">LDL</div>
<div style="left:1220px;top:339px;width:1px;height:20px;background:#d4d4d4"></div>
<div class="t" style="left:996.25px;width:600px;text-align:center;top:343.29px;font-size:10.6px;color:#111;font-weight:normal;">Bauteil</div>
<svg style="position:absolute;left:1224.5px;top:345px;" width="10" height="9" viewBox="0 0 10 9"><path d="M0.5 0.5 H9.5 L5 8.5Z" fill="#0000e0"/></svg>
<div style="left:312px;top:360px;width:1045px;height:20px;background:#fefee6"></div>
<div class="t" style="left:312px;top:364.29px;font-size:10.6px;color:#111;font-weight:normal;">IW m. Deckenauflager Pos 023</div>
<div style="left:542px;top:360px;width:1px;height:21px;background:#ececec"></div>
<div class="t" style="right:1082.5px;top:364.29px;font-size:10.6px;color:#111;font-weight:normal;">W (270°)</div>
<div style="left:618px;top:360px;width:1px;height:21px;background:#ececec"></div>
<div class="t" style="right:1034.5px;top:364.29px;font-size:10.6px;color:#111;font-weight:normal;">0,00</div>
<div style="left:666px;top:360px;width:1px;height:21px;background:#ececec"></div>
<div class="t" style="right:988.5px;top:364.29px;font-size:10.6px;color:#111;font-weight:normal;">0,00</div>
<div style="left:712px;top:360px;width:1px;height:21px;background:#ececec"></div>
<div class="t" style="right:914.5px;top:364.29px;font-size:10.6px;color:#111;font-weight:normal;">0,00</div>
<div style="left:786px;top:360px;width:1px;height:21px;background:#ececec"></div>
<div class="t" style="right:875.5px;top:364.29px;font-size:10.6px;color:#111;font-weight:normal;">0,36</div>
<div style="left:825px;top:360px;width:1px;height:21px;background:#ececec"></div>
<div class="t" style="right:834.5px;top:364.29px;font-size:10.6px;color:#111;font-weight:normal;">0,24</div>
<div style="left:866px;top:360px;width:1px;height:21px;background:#ececec"></div>
<div class="t" style="right:749px;top:364.29px;font-size:10.6px;color:#111;font-weight:normal;">10,45</div>
<div style="left:952px;top:360px;width:1px;height:21px;background:#ececec"></div>
<div class="t" style="left:954px;top:364.29px;font-size:10.6px;color:#111;font-weight:normal;">Innenwand</div>
<div style="left:1103px;top:360px;width:1px;height:21px;background:#ececec"></div>
<div class="t" style="left:1105.5px;top:364.29px;font-size:10.6px;color:#111;font-weight:normal;">1.1 Bad (9)</div>
<div style="left:1189px;top:360px;width:1px;height:21px;background:#ececec"></div>
<svg style="position:absolute;left:1199.0px;top:364px;" width="12" height="12" viewBox="0 0 12 12"><rect x="0" y="0" width="12" height="12" fill="#fff"/><path d="M0.5 12 V0.5 H12" stroke="#777" fill="none"/><path d="M1 11.5 H11.5 V1" stroke="#dcdcdc" fill="none"/></svg>
<div style="left:1220px;top:360px;width:1px;height:21px;background:#ececec"></div>
<div class="t" style="left:1222.5px;top:364.29px;font-size:10.6px;color:#111;font-weight:normal;">Innenwand</div>
<div style="left:312px;top:381px;width:1045px;height:20px;background:#ffffff"></div>
<div class="t" style="left:312px;top:385.29px;font-size:10.6px;color:#111;font-weight:normal;">AW 36,5 m. Deckenauflager S Pos 005</div>
<div style="left:542px;top:381px;width:1px;height:21px;background:#ececec"></div>
<div class="t" style="right:1082.5px;top:385.29px;font-size:10.6px;color:#111;font-weight:normal;">S (180°)</div>
<div style="left:618px;top:381px;width:1px;height:21px;background:#ececec"></div>
<div class="t" style="right:1034.5px;top:385.29px;font-size:10.6px;color:#111;font-weight:normal;">0,00</div>
<div style="left:666px;top:381px;width:1px;height:21px;background:#ececec"></div>
<div class="t" style="right:988.5px;top:385.29px;font-size:10.6px;color:#111;font-weight:normal;">0,00</div>
<div style="left:712px;top:381px;width:1px;height:21px;background:#ececec"></div>
<div class="t" style="right:914.5px;top:385.29px;font-size:10.6px;color:#111;font-weight:normal;">0,00</div>
<div style="left:786px;top:381px;width:1px;height:21px;background:#ececec"></div>
<div class="t" style="right:875.5px;top:385.29px;font-size:10.6px;color:#111;font-weight:normal;">0,36</div>
<div style="left:825px;top:381px;width:1px;height:21px;background:#ececec"></div>
<div class="t" style="right:834.5px;top:385.29px;font-size:10.6px;color:#111;font-weight:normal;">0,24</div>
<div style="left:866px;top:381px;width:1px;height:21px;background:#ececec"></div>
<div class="t" style="right:749px;top:385.29px;font-size:10.6px;color:#111;font-weight:normal;">17,43</div>
<div style="left:952px;top:381px;width:1px;height:21px;background:#ececec"></div>
<div class="t" style="left:954px;top:385.29px;font-size:10.6px;color:#111;font-weight:normal;">Außenwand</div>
<div style="left:1103px;top:381px;width:1px;height:21px;background:#ececec"></div>
<div class="t" style="left:1105.5px;top:385.29px;font-size:10.6px;color:#111;font-weight:normal;">Außenluft</div>
<div style="left:1189px;top:381px;width:1px;height:21px;background:#ececec"></div>
<svg style="position:absolute;left:1199.0px;top:385px;" width="12" height="12" viewBox="0 0 12 12"><rect x="0" y="0" width="12" height="12" fill="#fff"/><path d="M0.5 12 V0.5 H12" stroke="#777" fill="none"/><path d="M1 11.5 H11.5 V1" stroke="#dcdcdc" fill="none"/></svg>
<div style="left:1220px;top:381px;width:1px;height:21px;background:#ececec"></div>
<div class="t" style="left:1222.5px;top:385.29px;font-size:10.6px;color:#111;font-weight:normal;">Außenwand S</div>
<div style="left:312px;top:402px;width:1045px;height:20px;background:#fefee6"></div>
<div class="t" style="left:312px;top:406.29px;font-size:10.6px;color:#111;font-weight:normal;">AW 36,5 m. Deckenauflager O Pos 002</div>
<div style="left:542px;top:402px;width:1px;height:21px;background:#ececec"></div>
<div class="t" style="right:1082.5px;top:406.29px;font-size:10.6px;color:#111;font-weight:normal;">O (90°)</div>
<div style="left:618px;top:402px;width:1px;height:21px;background:#ececec"></div>
<div class="t" style="right:1034.5px;top:406.29px;font-size:10.6px;color:#111;font-weight:normal;">0,00</div>
<div style="left:666px;top:402px;width:1px;height:21px;background:#ececec"></div>
<div class="t" style="right:988.5px;top:406.29px;font-size:10.6px;color:#111;font-weight:normal;">0,00</div>
<div style="left:712px;top:402px;width:1px;height:21px;background:#ececec"></div>
<div class="t" style="right:914.5px;top:406.29px;font-size:10.6px;color:#111;font-weight:normal;">0,00</div>
<div style="left:786px;top:402px;width:1px;height:21px;background:#ececec"></div>
<div class="t" style="right:875.5px;top:406.29px;font-size:10.6px;color:#111;font-weight:normal;">0,36</div>
<div style="left:825px;top:402px;width:1px;height:21px;background:#ececec"></div>
<div class="t" style="right:834.5px;top:406.29px;font-size:10.6px;color:#111;font-weight:normal;">0,24</div>
<div style="left:866px;top:402px;width:1px;height:21px;background:#ececec"></div>
<div class="t" style="right:749px;top:406.29px;font-size:10.6px;color:#111;font-weight:normal;">10,45</div>
<div style="left:952px;top:402px;width:1px;height:21px;background:#ececec"></div>
<div class="t" style="left:954px;top:406.29px;font-size:10.6px;color:#111;font-weight:normal;">Außenwand</div>
<div style="left:1103px;top:402px;width:1px;height:21px;background:#ececec"></div>
<div class="t" style="left:1105.5px;top:406.29px;font-size:10.6px;color:#111;font-weight:normal;">Außenluft</div>
<div style="left:1189px;top:402px;width:1px;height:21px;background:#ececec"></div>
<svg style="position:absolute;left:1199.0px;top:406px;" width="12" height="12" viewBox="0 0 12 12"><rect x="0" y="0" width="12" height="12" fill="#fff"/><path d="M0.5 12 V0.5 H12" stroke="#777" fill="none"/><path d="M1 11.5 H11.5 V1" stroke="#dcdcdc" fill="none"/></svg>
<div style="left:1220px;top:402px;width:1px;height:21px;background:#ececec"></div>
<div class="t" style="left:1222.5px;top:406.29px;font-size:10.6px;color:#111;font-weight:normal;">Außenwand O</div>
<div style="left:312px;top:423px;width:1045px;height:20px;background:#ffffff"></div>
<div class="t" style="left:312px;top:427.29px;font-size:10.6px;color:#111;font-weight:normal;">IW m. Deckenauflager Pos 024</div>
<div style="left:542px;top:423px;width:1px;height:21px;background:#ececec"></div>
<div class="t" style="right:1082.5px;top:427.29px;font-size:10.6px;color:#111;font-weight:normal;">N (0°)</div>
<div style="left:618px;top:423px;width:1px;height:21px;background:#ececec"></div>
<div class="t" style="right:1034.5px;top:427.29px;font-size:10.6px;color:#111;font-weight:normal;">0,00</div>
<div style="left:666px;top:423px;width:1px;height:21px;background:#ececec"></div>
<div class="t" style="right:988.5px;top:427.29px;font-size:10.6px;color:#111;font-weight:normal;">0,00</div>
<div style="left:712px;top:423px;width:1px;height:21px;background:#ececec"></div>
<div class="t" style="right:914.5px;top:427.29px;font-size:10.6px;color:#111;font-weight:normal;">0,00</div>
<div style="left:786px;top:423px;width:1px;height:21px;background:#ececec"></div>
<div class="t" style="right:875.5px;top:427.29px;font-size:10.6px;color:#111;font-weight:normal;">0,36</div>
<div style="left:825px;top:423px;width:1px;height:21px;background:#ececec"></div>
<div class="t" style="right:834.5px;top:427.29px;font-size:10.6px;color:#111;font-weight:normal;">0,24</div>
<div style="left:866px;top:423px;width:1px;height:21px;background:#ececec"></div>
<div class="t" style="right:749px;top:427.29px;font-size:10.6px;color:#111;font-weight:normal;">16,12</div>
<div style="left:952px;top:423px;width:1px;height:21px;background:#ececec"></div>
<div class="t" style="left:954px;top:427.29px;font-size:10.6px;color:#111;font-weight:normal;">Innenwand</div>
<div style="left:1103px;top:423px;width:1px;height:21px;background:#ececec"></div>
<div class="t" style="left:1105.5px;top:427.29px;font-size:10.6px;color:#111;font-weight:normal;">1.4 Kinderzimm…</div>
<div style="left:1189px;top:423px;width:1px;height:21px;background:#ececec"></div>
<svg style="position:absolute;left:1199.0px;top:427px;" width="12" height="12" viewBox="0 0 12 12"><rect x="0" y="0" width="12" height="12" fill="#fff"/><path d="M0.5 12 V0.5 H12" stroke="#777" fill="none"/><path d="M1 11.5 H11.5 V1" stroke="#dcdcdc" fill="none"/></svg>
<div style="left:1220px;top:423px;width:1px;height:21px;background:#ececec"></div>
<div class="t" style="left:1222.5px;top:427.29px;font-size:10.6px;color:#111;font-weight:normal;">Innenwand</div>
<div style="left:312px;top:444px;width:1045px;height:20px;background:#fefee6"></div>
<div class="t" style="left:312px;top:448.29px;font-size:10.6px;color:#111;font-weight:normal;">IW m. Deckenauflager Pos 024</div>
<div style="left:542px;top:444px;width:1px;height:21px;background:#ececec"></div>
<div class="t" style="right:1082.5px;top:448.29px;font-size:10.6px;color:#111;font-weight:normal;">N (0°)</div>
<div style="left:618px;top:444px;width:1px;height:21px;background:#ececec"></div>
<div class="t" style="right:1034.5px;top:448.29px;font-size:10.6px;color:#111;font-weight:normal;">0,00</div>
<div style="left:666px;top:444px;width:1px;height:21px;background:#ececec"></div>
<div class="t" style="right:988.5px;top:448.29px;font-size:10.6px;color:#111;font-weight:normal;">0,00</div>
<div style="left:712px;top:444px;width:1px;height:21px;background:#ececec"></div>
<div class="t" style="right:914.5px;top:448.29px;font-size:10.6px;color:#111;font-weight:normal;">0,00</div>
<div style="left:786px;top:444px;width:1px;height:21px;background:#ececec"></div>
<div class="t" style="right:875.5px;top:448.29px;font-size:10.6px;color:#111;font-weight:normal;">0,36</div>
<div style="left:825px;top:444px;width:1px;height:21px;background:#ececec"></div>
<div class="t" style="right:834.5px;top:448.29px;font-size:10.6px;color:#111;font-weight:normal;">0,24</div>
<div style="left:866px;top:444px;width:1px;height:21px;background:#ececec"></div>
<div class="t" style="right:749px;top:448.29px;font-size:10.6px;color:#111;font-weight:normal;">8,14</div>
<div style="left:952px;top:444px;width:1px;height:21px;background:#ececec"></div>
<div class="t" style="left:954px;top:448.29px;font-size:10.6px;color:#111;font-weight:normal;">Innenwand</div>
<div style="left:1103px;top:444px;width:1px;height:21px;background:#ececec"></div>
<div class="t" style="left:1105.5px;top:448.29px;font-size:10.6px;color:#111;font-weight:normal;">1.2 Flur (5)</div>
<div style="left:1189px;top:444px;width:1px;height:21px;background:#ececec"></div>
<svg style="position:absolute;left:1199.0px;top:448px;" width="12" height="12" viewBox="0 0 12 12"><rect x="0" y="0" width="12" height="12" fill="#fff"/><path d="M0.5 12 V0.5 H12" stroke="#777" fill="none"/><path d="M1 11.5 H11.5 V1" stroke="#dcdcdc" fill="none"/></svg>
<div style="left:1220px;top:444px;width:1px;height:21px;background:#ececec"></div>
<div class="t" style="left:1222.5px;top:448.29px;font-size:10.6px;color:#111;font-weight:normal;">Innenwand</div>
<div style="left:311px;top:465px;width:1087px;height:1px;background:#c4c4c4"></div>
<div style="left:312px;top:466px;width:1046px;height:20px;background:#e8e8e8"></div>
<div style="left:312px;top:486px;width:1046px;height:1px;background:#d6d6d6"></div>
<div class="t" style="left:125.75px;width:600px;text-align:center;top:470.29px;font-size:10.6px;color:#111;font-weight:normal;">Fenster/Ersatz</div>
<div style="left:529px;top:466px;width:1px;height:20px;background:#d4d4d4"></div>
<div class="t" style="left:280.0px;width:600px;text-align:center;top:470.29px;font-size:10.6px;color:#111;font-weight:normal;">Breite (netto)</div>
<div style="left:630px;top:466px;width:1px;height:20px;background:#d4d4d4"></div>
<div class="t" style="left:353.5px;width:600px;text-align:center;top:470.29px;font-size:10.6px;color:#111;font-weight:normal;">H_i</div>
<div style="left:676px;top:466px;width:1px;height:20px;background:#d4d4d4"></div>
<div class="t" style="left:399.5px;width:600px;text-align:center;top:470.29px;font-size:10.6px;color:#111;font-weight:normal;">BH</div>
<div style="left:722px;top:466px;width:1px;height:20px;background:#d4d4d4"></div>
<div class="t" style="left:445.5px;width:600px;text-align:center;top:470.29px;font-size:10.6px;color:#111;font-weight:normal;">A_i</div>
<div style="left:768px;top:466px;width:1px;height:20px;background:#d4d4d4"></div>
<div class="t" style="left:489.0px;width:600px;text-align:center;top:470.29px;font-size:10.6px;color:#111;font-weight:normal;">Anzahl</div>
<div style="left:809px;top:466px;width:1px;height:20px;background:#d4d4d4"></div>
<div class="t" style="left:618.0px;width:600px;text-align:center;top:470.29px;font-size:10.6px;color:#111;font-weight:normal;">in Teilfläche</div>
<div style="left:1026px;top:466px;width:1px;height:20px;background:#d4d4d4"></div>
<div class="t" style="left:775.5px;width:600px;text-align:center;top:470.29px;font-size:10.6px;color:#111;font-weight:normal;">Konstruktion</div>
<div style="left:1124px;top:466px;width:1px;height:20px;background:#d4d4d4"></div>
<div class="t" style="left:867.5px;width:600px;text-align:center;top:470.29px;font-size:10.6px;color:#111;font-weight:normal;">Typ</div>
<div style="left:1210px;top:466px;width:1px;height:20px;background:#d4d4d4"></div>
<div class="t" style="left:926.0px;width:600px;text-align:center;top:470.29px;font-size:10.6px;color:#111;font-weight:normal;">LDL</div>
<div style="left:1241px;top:466px;width:1px;height:20px;background:#d4d4d4"></div>
<div class="t" style="left:999.75px;width:600px;text-align:center;top:470.29px;font-size:10.6px;color:#111;font-weight:normal;">Bauteil</div>
<svg style="position:absolute;left:315px;top:472px;" width="10" height="9" viewBox="0 0 10 9"><path d="M0.5 0.5 H9.5 L5 8.5Z" fill="#0000e0"/></svg>
<div style="left:312px;top:487px;width:1046px;height:20px;background:#fefee6"></div>
<div class="t" style="left:312px;top:491.29px;font-size:10.6px;color:#111;font-weight:normal;">1flg. in AW 36,5 m. Deckenauflager S Pos (…</div>
<div style="left:529px;top:487px;width:1px;height:21px;background:#ececec"></div>
<div class="t" style="right:1070.5px;top:491.29px;font-size:10.6px;color:#111;font-weight:normal;">0,80</div>
<div style="left:630px;top:487px;width:1px;height:21px;background:#ececec"></div>
<div class="t" style="right:1024.5px;top:491.29px;font-size:10.6px;color:#111;font-weight:normal;">1,54</div>
<div style="left:676px;top:487px;width:1px;height:21px;background:#ececec"></div>
<div class="t" style="right:978.5px;top:491.29px;font-size:10.6px;color:#111;font-weight:normal;">0,60</div>
<div style="left:722px;top:487px;width:1px;height:21px;background:#ececec"></div>
<div class="t" style="right:932.5px;top:491.29px;font-size:10.6px;color:#111;font-weight:normal;">1,23</div>
<div style="left:768px;top:487px;width:1px;height:21px;background:#ececec"></div>
<div class="t" style="right:891.5px;top:491.29px;font-size:10.6px;color:#111;font-weight:normal;">1</div>
<div style="left:809px;top:487px;width:1px;height:21px;background:#ececec"></div>
<div class="t" style="left:811.5px;top:491.29px;font-size:10.6px;color:#111;font-weight:normal;">AW 36,5 m. Deckenauflager S Pos 005</div>
<div style="left:1026px;top:487px;width:1px;height:21px;background:#ececec"></div>
<div class="t" style="left:1028.5px;top:491.29px;font-size:10.6px;color:#111;font-weight:normal;">Fenster</div>
<div style="left:1124px;top:487px;width:1px;height:21px;background:#ececec"></div>
<div class="t" style="left:1126.5px;top:491.29px;font-size:10.6px;color:#111;font-weight:normal;">Fenster/Tür</div>
<div style="left:1210px;top:487px;width:1px;height:21px;background:#ececec"></div>
<svg style="position:absolute;left:1220.0px;top:491px;" width="12" height="12" viewBox="0 0 12 12"><rect x="0" y="0" width="12" height="12" fill="#fff"/><path d="M0.5 12 V0.5 H12" stroke="#777" fill="none"/><path d="M1 11.5 H11.5 V1" stroke="#dcdcdc" fill="none"/></svg>
<div style="left:1241px;top:487px;width:1px;height:21px;background:#ececec"></div>
<div class="t" style="left:1243.5px;top:491.29px;font-size:10.6px;color:#111;font-weight:normal;">Fenster S</div>
<div style="left:312px;top:508px;width:1046px;height:20px;background:#ffffff"></div>
<div class="t" style="left:312px;top:512.29px;font-size:10.6px;color:#111;font-weight:normal;">1flg. in AW 36,5 m. Deckenauflager S Pos (…</div>
<div style="left:529px;top:508px;width:1px;height:21px;background:#ececec"></div>
<div class="t" style="right:1070.5px;top:512.29px;font-size:10.6px;color:#111;font-weight:normal;">1,95</div>
<div style="left:630px;top:508px;width:1px;height:21px;background:#ececec"></div>
<div class="t" style="right:1024.5px;top:512.29px;font-size:10.6px;color:#111;font-weight:normal;">2,14</div>
<div style="left:676px;top:508px;width:1px;height:21px;background:#ececec"></div>
<div class="t" style="right:978.5px;top:512.29px;font-size:10.6px;color:#111;font-weight:normal;">0,00</div>
<div style="left:722px;top:508px;width:1px;height:21px;background:#ececec"></div>
<div class="t" style="right:932.5px;top:512.29px;font-size:10.6px;color:#111;font-weight:normal;">4,17</div>
<div style="left:768px;top:508px;width:1px;height:21px;background:#ececec"></div>
<div class="t" style="right:891.5px;top:512.29px;font-size:10.6px;color:#111;font-weight:normal;">1</div>
<div style="left:809px;top:508px;width:1px;height:21px;background:#ececec"></div>
<div class="t" style="left:811.5px;top:512.29px;font-size:10.6px;color:#111;font-weight:normal;">AW 36,5 m. Deckenauflager S Pos 005</div>
<div style="left:1026px;top:508px;width:1px;height:21px;background:#ececec"></div>
<div class="t" style="left:1028.5px;top:512.29px;font-size:10.6px;color:#111;font-weight:normal;">Fenster</div>
<div style="left:1124px;top:508px;width:1px;height:21px;background:#ececec"></div>
<div class="t" style="left:1126.5px;top:512.29px;font-size:10.6px;color:#111;font-weight:normal;">Fenster/Tür</div>
<div style="left:1210px;top:508px;width:1px;height:21px;background:#ececec"></div>
<svg style="position:absolute;left:1220.0px;top:512px;" width="12" height="12" viewBox="0 0 12 12"><rect x="0" y="0" width="12" height="12" fill="#fff"/><path d="M0.5 12 V0.5 H12" stroke="#777" fill="none"/><path d="M1 11.5 H11.5 V1" stroke="#dcdcdc" fill="none"/></svg>
<div style="left:1241px;top:508px;width:1px;height:21px;background:#ececec"></div>
<div class="t" style="left:1243.5px;top:512.29px;font-size:10.6px;color:#111;font-weight:normal;">Fenster S</div>
<div style="left:312px;top:529px;width:1046px;height:20px;background:#fefee6"></div>
<div class="t" style="left:312px;top:533.29px;font-size:10.6px;color:#111;font-weight:normal;">1flg. in AW 36,5 m. Deckenauflager O Pos …</div>
<div style="left:529px;top:529px;width:1px;height:21px;background:#ececec"></div>
<div class="t" style="right:1070.5px;top:533.29px;font-size:10.6px;color:#111;font-weight:normal;">0,80</div>
<div style="left:630px;top:529px;width:1px;height:21px;background:#ececec"></div>
<div class="t" style="right:1024.5px;top:533.29px;font-size:10.6px;color:#111;font-weight:normal;">2,14</div>
<div style="left:676px;top:529px;width:1px;height:21px;background:#ececec"></div>
<div class="t" style="right:978.5px;top:533.29px;font-size:10.6px;color:#111;font-weight:normal;">0,00</div>
<div style="left:722px;top:529px;width:1px;height:21px;background:#ececec"></div>
<div class="t" style="right:932.5px;top:533.29px;font-size:10.6px;color:#111;font-weight:normal;">1,71</div>
<div style="left:768px;top:529px;width:1px;height:21px;background:#ececec"></div>
<div class="t" style="right:891.5px;top:533.29px;font-size:10.6px;color:#111;font-weight:normal;">1</div>
<div style="left:809px;top:529px;width:1px;height:21px;background:#ececec"></div>
<div class="t" style="left:811.5px;top:533.29px;font-size:10.6px;color:#111;font-weight:normal;">AW 36,5 m. Deckenauflager O Pos 002</div>
<div style="left:1026px;top:529px;width:1px;height:21px;background:#ececec"></div>
<div class="t" style="left:1028.5px;top:533.29px;font-size:10.6px;color:#111;font-weight:normal;">Fenster</div>
<div style="left:1124px;top:529px;width:1px;height:21px;background:#ececec"></div>
<div class="t" style="left:1126.5px;top:533.29px;font-size:10.6px;color:#111;font-weight:normal;">Fenster/Tür</div>
<div style="left:1210px;top:529px;width:1px;height:21px;background:#ececec"></div>
<svg style="position:absolute;left:1220.0px;top:533px;" width="12" height="12" viewBox="0 0 12 12"><rect x="0" y="0" width="12" height="12" fill="#fff"/><path d="M0.5 12 V0.5 H12" stroke="#777" fill="none"/><path d="M1 11.5 H11.5 V1" stroke="#dcdcdc" fill="none"/></svg>
<div style="left:1241px;top:529px;width:1px;height:21px;background:#ececec"></div>
<div class="t" style="left:1243.5px;top:533.29px;font-size:10.6px;color:#111;font-weight:normal;">Fenster O</div>
<div style="left:312px;top:550px;width:1046px;height:20px;background:#ffffff"></div>
<div class="t" style="left:312px;top:554.29px;font-size:10.6px;color:#111;font-weight:normal;">IT Tür 4</div>
<div style="left:529px;top:550px;width:1px;height:21px;background:#ececec"></div>
<div class="t" style="right:1070.5px;top:554.29px;font-size:10.6px;color:#111;font-weight:normal;">0,88</div>
<div style="left:630px;top:550px;width:1px;height:21px;background:#ececec"></div>
<div class="t" style="right:1024.5px;top:554.29px;font-size:10.6px;color:#111;font-weight:normal;">2,01</div>
<div style="left:676px;top:550px;width:1px;height:21px;background:#ececec"></div>
<div class="t" style="right:978.5px;top:554.29px;font-size:10.6px;color:#111;font-weight:normal;">0,00</div>
<div style="left:722px;top:550px;width:1px;height:21px;background:#ececec"></div>
<div class="t" style="right:932.5px;top:554.29px;font-size:10.6px;color:#111;font-weight:normal;">1,77</div>
<div style="left:768px;top:550px;width:1px;height:21px;background:#ececec"></div>
<div class="t" style="right:891.5px;top:554.29px;font-size:10.6px;color:#111;font-weight:normal;">1</div>
<div style="left:809px;top:550px;width:1px;height:21px;background:#ececec"></div>
<div class="t" style="left:811.5px;top:554.29px;font-size:10.6px;color:#111;font-weight:normal;">IW m. Deckenauflager Pos 024</div>
<div style="left:1026px;top:550px;width:1px;height:21px;background:#ececec"></div>
<div class="t" style="left:1028.5px;top:554.29px;font-size:10.6px;color:#111;font-weight:normal;">Innentür</div>
<div style="left:1124px;top:550px;width:1px;height:21px;background:#ececec"></div>
<div class="t" style="left:1126.5px;top:554.29px;font-size:10.6px;color:#111;font-weight:normal;">Fenster/Tür</div>
<div style="left:1210px;top:550px;width:1px;height:21px;background:#ececec"></div>
<svg style="position:absolute;left:1220.0px;top:554px;" width="12" height="12" viewBox="0 0 12 12"><rect x="0" y="0" width="12" height="12" fill="#fff"/><path d="M0.5 12 V0.5 H12" stroke="#777" fill="none"/><path d="M1 11.5 H11.5 V1" stroke="#dcdcdc" fill="none"/><path d="M2.5 6 L5 9 L9.5 2.5" fill="none" stroke="#111" stroke-width="1.6"/></svg>
<div style="left:1241px;top:550px;width:1px;height:21px;background:#ececec"></div>
<div class="t" style="left:1243.5px;top:554.29px;font-size:10.6px;color:#111;font-weight:normal;">Innentür</div>
<div style="left:311px;top:570px;width:1087px;height:1px;background:#c8c8c8"></div>
<div style="left:308px;top:222px;width:1055px;height:348px;border:4px solid #fe0000;filter:drop-shadow(2px 2px 2px rgba(0,0,0,0.7))"></div>
<div style="left:303px;top:122px;width:323px;height:77px;border:4px solid #fe0000;filter:drop-shadow(2px 2px 2px rgba(0,0,0,0.7))"></div>
<div style="left:624px;top:94px;width:201px;height:57px;border:4px solid #fe0000;filter:drop-shadow(2px 2px 2px rgba(0,0,0,0.7))"></div>
<div style="left:1424px;top:72px;width:274px;height:651px;background:#f0f0f0"></div>
<div style="left:1427px;top:72px;width:250px;height:21px;background:#fdfdfd;border:1px solid #e2e2e2;border-bottom:1px solid #b0b0b0;border-radius:2px"></div>
<div class="t" style="left:1431px;top:77.15px;font-size:11px;color:#111;font-weight:normal;">Ist-Zustand</div>
<svg style="position:absolute;left:1662px;top:80px;" width="10" height="6" viewBox="0 0 10 6"><path d="M0.5 0.5 L5 5 L9.5 0.5" fill="none" stroke="#444" stroke-width="1"/></svg>
<div style="left:1678px;top:72px;width:22px;height:21px;background:#a6cf38;border:1.5px solid #1a5fb4;border-radius:3px"></div>
<div class="t" style="left:1388.5px;width:600px;text-align:center;top:75.05px;font-size:17px;color:#fff;font-weight:normal;-webkit-text-stroke:0">A</div>
<div style="left:1427px;top:93px;width:271px;height:630px;background:#7b7b7b"></div>
<div style="left:1430px;top:96px;width:268px;height:406px;background:#ffffff"></div>
<div style="left:1430px;top:507px;width:268px;height:125px;background:#ffffff"></div>
<div style="left:1430px;top:636px;width:268px;height:87px;background:#ffffff"></div>
<div class="t" style="left:1441px;top:107.22px;font-size:21.5px;color:#222;font-weight:normal;-webkit-text-stroke:0">GEG 2024</div>
<div class="t" style="left:1441px;top:131.56px;font-size:16.4px;color:#222;font-weight:normal;-webkit-text-stroke:0">DIN V 18599</div>
<div style="left:1660.5px;top:109.1px;width:23px;height:23px;border-radius:50%;background:#7aac1a"></div>
<div style="left:1445px;top:155px;width:238px;height:164px;background:#fff;box-shadow:1px 1px 3px rgba(0,0,0,0.35)"></div>
<div style="left:1445px;top:155px;width:20px;height:164px;background:#d3d3d3"></div>
<div style="left:1469px;top:155px;width:214px;height:164px;background:#5c9a08"></div>
<div class="t" style="left:1455px;top:237px;font-size:11px;color:#222;transform:translate(-50%,-50%) rotate(-90deg);line-height:1">Effizienzklasse</div>
<svg style="position:absolute;left:1469px;top:155px;filter:drop-shadow(1px 1px 1px rgba(0,0,0,0.3))" width="214" height="164" viewBox="0 0 214 164"><g transform="translate(-1469,-155)" fill="#fff"><path fill-rule="evenodd" d="M1485,285 L1523,175.5 L1542,175.5 L1580.7,285 L1564,285 L1553,254 L1511.8,254 L1501,285 Z M1516.9,239.2 L1547.8,239.2 L1532.2,195 Z"/><rect x="1620" y="213" width="11" height="74"/><rect x="1589" y="244" width="73" height="12"/></g></svg>
<div class="t" style="right:34px;top:295.14px;font-size:16.3px;color:#ffffff;font-weight:normal;"><b>3,7</b> kWh/(m²a)</div>
<div style="left:1445px;top:327px;width:238px;height:62px;background:#fff;box-shadow:1px 1px 3px rgba(0,0,0,0.35)"></div>
<div style="left:1445px;top:327px;width:20px;height:62px;background:#d3d3d3"></div>
<div class="t" style="left:1455px;top:358.0px;font-size:11px;color:#222;transform:translate(-50%,-50%) rotate(-90deg);line-height:1">Q<span style="font-size:8px;vertical-align:super">P</span></div>
<div style="left:1469px;top:327px;width:128px;height:20px;background:#d3d3d3"></div>
<div style="left:1469px;top:347px;width:71px;height:21px;background:#3d82b8"></div>
<div style="left:1469px;top:368px;width:10px;height:20px;background:linear-gradient(90deg,#4c8a0a,#6aaa14)"></div>
<div class="t" style="left:1475px;top:332.15px;font-size:11px;color:#111;font-weight:normal;">91,5 kWh/(m²a)</div>
<div class="t" style="left:1475px;top:352.65px;font-size:11px;color:#111;font-weight:normal;">50,3 kWh/(m²a)</div>
<div class="t" style="left:1475px;top:373.15px;font-size:11px;color:#111;font-weight:normal;">6,7 kWh/(m²a)</div>
<div style="left:1445px;top:395px;width:238px;height:62px;background:#fff;box-shadow:1px 1px 3px rgba(0,0,0,0.35)"></div>
<div style="left:1445px;top:395px;width:20px;height:62px;background:#d3d3d3"></div>
<div class="t" style="left:1455px;top:426.0px;font-size:11px;color:#222;transform:translate(-50%,-50%) rotate(-90deg);line-height:1">HT</div>
<div style="left:1469px;top:395px;width:109px;height:21px;background:#d3d3d3"></div>
<div style="left:1469px;top:416px;width:109px;height:20px;background:#3d82b8"></div>
<div style="left:1469px;top:436px;width:60px;height:21px;background:linear-gradient(90deg,#4c8a0a,#b4dc3c)"></div>
<div class="t" style="left:1475px;top:400.65px;font-size:11px;color:#111;font-weight:normal;">0,41 W/(m²K)</div>
<div class="t" style="left:1475px;top:421.15px;font-size:11px;color:#111;font-weight:normal;">0,41 W/(m²K)</div>
<div class="t" style="left:1475px;top:441.15px;font-size:11px;color:#111;font-weight:normal;">0,22 W/(m²K)</div>
<div style="left:1445px;top:464px;width:238px;height:22px;background:#fff;box-shadow:1px 1px 3px rgba(0,0,0,0.35)"></div>
<div style="left:1445px;top:464px;width:20px;height:22px;background:#d3d3d3"></div>
<div class="t" style="left:1455px;top:475.0px;font-size:10px;color:#222;transform:translate(-50%,-50%) rotate(-90deg);line-height:1">EH</div>
<div style="left:1469px;top:464px;width:48px;height:22px;background:#82b51e"></div>
<div class="t" style="right:182px;top:469.65px;font-size:11px;color:#fff;font-weight:bold;">40</div>
<div class="t" style="left:1441px;top:519.73px;font-size:21.5px;color:#222;font-weight:normal;-webkit-text-stroke:0">Erneuerbare</div>
<div class="t" style="left:1441px;top:545.52px;font-size:21.5px;color:#222;font-weight:normal;-webkit-text-stroke:0">Energien</div>
<div style="left:1660.5px;top:520.5px;width:23px;height:23px;border-radius:50%;background:#7aac1a"></div>
<div style="left:1445px;top:573px;width:238px;height:42px;background:#fff;box-shadow:1px 1px 3px rgba(0,0,0,0.35)"></div>
<div style="left:1445px;top:573px;width:20px;height:42px;background:#d3d3d3"></div>
<div class="t" style="left:1455px;top:594.0px;font-size:10px;color:#222;transform:translate(-50%,-50%) rotate(-90deg);line-height:1">EE</div>
<div style="left:1469px;top:573px;width:139px;height:21px;background:#d3d3d3"></div>
<div style="left:1469px;top:594px;width:214px;height:21px;background:linear-gradient(90deg,#b81c1c 0%,#e06a20 25%,#fcd22a 48%,#a6cf38 78%,#4e9a06 100%)"></div>
<div class="t" style="left:1474px;top:579.50px;font-size:10px;color:#111;font-weight:normal;">65 %</div>
<div class="t" style="left:1474px;top:600.00px;font-size:10px;color:#111;font-weight:normal;">100 %</div>
<div class="t" style="left:1441px;top:648.73px;font-size:21.5px;color:#222;font-weight:normal;-webkit-text-stroke:0">Sommerlicher</div>
<div class="t" style="left:1441px;top:674.52px;font-size:21.5px;color:#222;font-weight:normal;-webkit-text-stroke:0">Wärmeschutz</div>
<div class="t" style="left:1441px;top:698.56px;font-size:16.4px;color:#222;font-weight:normal;-webkit-text-stroke:0">DIN 4108-2</div>
<div style="left:1660.5px;top:649.5px;width:23px;height:23px;border-radius:50%;background:#7aac1a"></div>
</body></html>
